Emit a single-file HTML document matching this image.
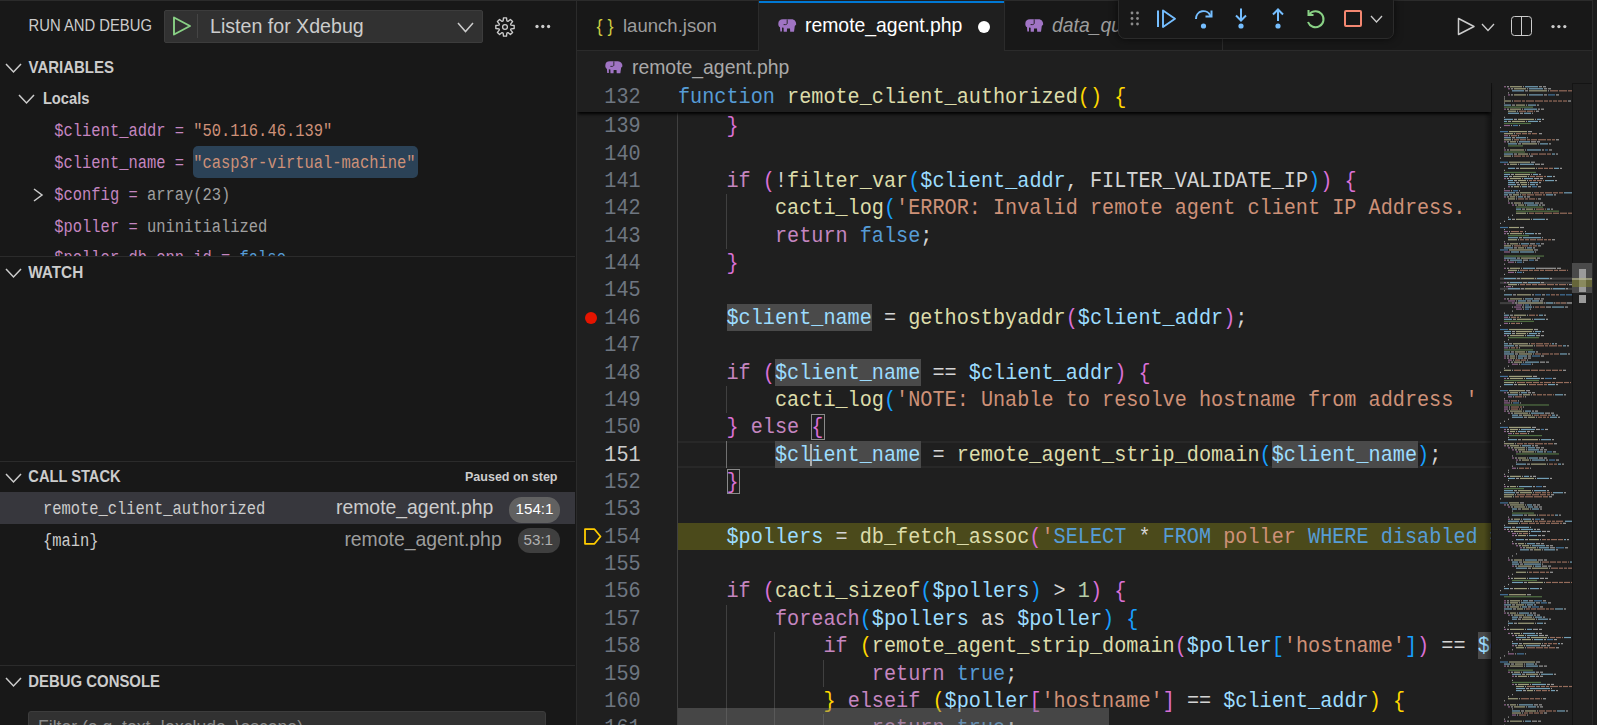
<!DOCTYPE html>
<html><head><meta charset="utf-8">
<style>
*{margin:0;padding:0;box-sizing:border-box}
html,body{width:1597px;height:725px;overflow:hidden;background:#181818;font-family:"Liberation Sans",sans-serif}
.r{position:absolute}
.t{position:absolute;white-space:nowrap}
#side{position:absolute;left:0;top:0;width:576px;height:725px;overflow:hidden}
#ed{position:absolute;left:0;top:0;width:1597px;height:725px;overflow:hidden}
#clip{position:absolute;left:0;top:0;width:1491px;height:725px;overflow:hidden}
.ln{position:absolute;left:577.7px;width:63px;text-align:right;font-family:"Liberation Mono",monospace;font-size:20.210px;line-height:27.36px;height:27.36px;color:#6e7681;white-space:pre;transform:translateY(0.8px) scaleY(1.1);transform-origin:0 19.07px}
.ln.cur{color:#cccccc}
.cl{position:absolute;left:678px;font-family:"Liberation Mono",monospace;font-size:20.210px;line-height:27.36px;height:27.36px;color:#d4d4d4;white-space:pre;transform:translateY(1.5px) scaleY(1.06);transform-origin:0 19.07px}
</style></head><body>
<div id="ed">
<div class="r" style="left:577px;top:0px;width:1020px;height:725px;background:#1f1f1f;"></div>
<div class="r" style="left:677px;top:522.7px;width:814px;height:27.36px;background:#4b4a1b;"></div>
<div class="r" style="left:677px;top:440.62px;width:814px;height:27.36px;background:transparent;border-top:2px solid #282828;border-bottom:2px solid #282828;"></div>
<div class="r" style="left:677.0px;top:112px;width:1px;height:629.6px;background:#404040;"></div>
<div class="r" style="left:725.5px;top:194.4px;width:1px;height:54.7px;background:#404040;"></div>
<div class="r" style="left:725.5px;top:385.9px;width:1px;height:27.4px;background:#404040;"></div>
<div class="r" style="left:725.5px;top:440.6px;width:1px;height:27.4px;background:#707070;"></div>
<div class="r" style="left:725.5px;top:604.8px;width:1px;height:136.8px;background:#404040;"></div>
<div class="r" style="left:774.0px;top:632.1px;width:1px;height:109.4px;background:#404040;"></div>
<div class="r" style="left:822.5px;top:659.5px;width:1px;height:27.4px;background:#404040;"></div>
<div class="r" style="left:822.5px;top:714.2px;width:1px;height:27.4px;background:#404040;"></div>
<div class="r" style="left:726.5px;top:303.82px;width:145.51px;height:27.36px;background:#4a4a4a;"></div>
<div class="r" style="left:775.01px;top:358.54px;width:145.51px;height:27.36px;background:#4a4a4a;"></div>
<div class="r" style="left:811.39px;top:414.26px;width:13.13px;height:25.36px;background:transparent;border:1px solid #8a8a8a;"></div>
<div class="r" style="left:775.01px;top:440.62px;width:145.51px;height:27.36px;background:#4a4a4a;"></div>
<div class="r" style="left:1272.17px;top:440.62px;width:145.51px;height:27.36px;background:#4a4a4a;"></div>
<div class="r" style="left:726.5px;top:468.98px;width:13.13px;height:25.36px;background:transparent;border:1px solid #8a8a8a;"></div>
<div class="r" style="left:1478.32px;top:632.14px;width:145.51px;height:27.36px;background:#4a4a4a;"></div>
<div class="ln" style="top:112.30px">139</div>
<div class="cl" style="top:112.30px"><span style="color:#d4d4d4">    </span><span style="color:#da70d6">}</span></div>
<div class="ln" style="top:139.66px">140</div>
<div class="ln" style="top:167.02px">141</div>
<div class="cl" style="top:167.02px"><span style="color:#d4d4d4">    </span><span style="color:#c586c0">if</span><span style="color:#d4d4d4"> </span><span style="color:#da70d6">(</span><span style="color:#d4d4d4">!</span><span style="color:#dcdcaa">filter_var</span><span style="color:#179fff">(</span><span style="color:#9cdcfe">$client_addr</span><span style="color:#d4d4d4">, FILTER_VALIDATE_IP</span><span style="color:#179fff">)</span><span style="color:#da70d6">)</span><span style="color:#d4d4d4"> </span><span style="color:#da70d6">{</span></div>
<div class="ln" style="top:194.38px">142</div>
<div class="cl" style="top:194.38px"><span style="color:#d4d4d4">        </span><span style="color:#dcdcaa">cacti_log</span><span style="color:#179fff">(</span><span style="color:#ce9178">&#x27;ERROR: Invalid remote agent client IP Address. </span></div>
<div class="ln" style="top:221.74px">143</div>
<div class="cl" style="top:221.74px"><span style="color:#d4d4d4">        </span><span style="color:#c586c0">return</span><span style="color:#d4d4d4"> </span><span style="color:#569cd6">false</span><span style="color:#d4d4d4">;</span></div>
<div class="ln" style="top:249.10px">144</div>
<div class="cl" style="top:249.10px"><span style="color:#d4d4d4">    </span><span style="color:#da70d6">}</span></div>
<div class="ln" style="top:276.46px">145</div>
<div class="ln" style="top:303.82px">146</div>
<div class="cl" style="top:303.82px"><span style="color:#d4d4d4">    </span><span style="color:#9cdcfe">$client_name</span><span style="color:#d4d4d4"> = </span><span style="color:#dcdcaa">gethostbyaddr</span><span style="color:#da70d6">(</span><span style="color:#9cdcfe">$client_addr</span><span style="color:#da70d6">)</span><span style="color:#d4d4d4">;</span></div>
<div class="ln" style="top:331.18px">147</div>
<div class="ln" style="top:358.54px">148</div>
<div class="cl" style="top:358.54px"><span style="color:#d4d4d4">    </span><span style="color:#c586c0">if</span><span style="color:#d4d4d4"> </span><span style="color:#da70d6">(</span><span style="color:#9cdcfe">$client_name</span><span style="color:#d4d4d4"> == </span><span style="color:#9cdcfe">$client_addr</span><span style="color:#da70d6">)</span><span style="color:#d4d4d4"> </span><span style="color:#da70d6">{</span></div>
<div class="ln" style="top:385.90px">149</div>
<div class="cl" style="top:385.90px"><span style="color:#d4d4d4">        </span><span style="color:#dcdcaa">cacti_log</span><span style="color:#179fff">(</span><span style="color:#ce9178">&#x27;NOTE: Unable to resolve hostname from address &#x27; . $client_addr</span></div>
<div class="ln" style="top:413.26px">150</div>
<div class="cl" style="top:413.26px"><span style="color:#d4d4d4">    </span><span style="color:#da70d6">}</span><span style="color:#d4d4d4"> </span><span style="color:#c586c0">else</span><span style="color:#d4d4d4"> </span><span style="color:#da70d6">{</span></div>
<div class="ln cur" style="top:440.62px">151</div>
<div class="cl" style="top:440.62px"><span style="color:#d4d4d4">        </span><span style="color:#9cdcfe">$client_name</span><span style="color:#d4d4d4"> = </span><span style="color:#dcdcaa">remote_agent_strip_domain</span><span style="color:#179fff">(</span><span style="color:#9cdcfe">$client_name</span><span style="color:#179fff">)</span><span style="color:#d4d4d4">;</span></div>
<div class="ln" style="top:467.98px">152</div>
<div class="cl" style="top:467.98px"><span style="color:#d4d4d4">    </span><span style="color:#da70d6">}</span></div>
<div class="ln" style="top:495.34px">153</div>
<div class="ln" style="top:522.70px">154</div>
<div class="cl" style="top:522.70px"><span style="color:#d4d4d4">    </span><span style="color:#9cdcfe">$pollers</span><span style="color:#d4d4d4"> = </span><span style="color:#dcdcaa">db_fetch_assoc</span><span style="color:#da70d6">(</span><span style="color:#ce9178">&#x27;</span><span style="color:#569cd6">SELECT</span><span style="color:#d4d4d4"> * </span><span style="color:#569cd6">FROM</span><span style="color:#ce9178"> poller </span><span style="color:#569cd6">WHERE</span><span style="color:#569cd6"> disabled</span><span style="color:#d4d4d4"> = </span><span style="color:#ce9178">&quot;&quot;)</span></div>
<div class="ln" style="top:550.06px">155</div>
<div class="ln" style="top:577.42px">156</div>
<div class="cl" style="top:577.42px"><span style="color:#d4d4d4">    </span><span style="color:#c586c0">if</span><span style="color:#d4d4d4"> </span><span style="color:#da70d6">(</span><span style="color:#dcdcaa">cacti_sizeof</span><span style="color:#179fff">(</span><span style="color:#9cdcfe">$pollers</span><span style="color:#179fff">)</span><span style="color:#d4d4d4"> &gt; </span><span style="color:#b5cea8">1</span><span style="color:#da70d6">)</span><span style="color:#d4d4d4"> </span><span style="color:#da70d6">{</span></div>
<div class="ln" style="top:604.78px">157</div>
<div class="cl" style="top:604.78px"><span style="color:#d4d4d4">        </span><span style="color:#c586c0">foreach</span><span style="color:#179fff">(</span><span style="color:#9cdcfe">$pollers</span><span style="color:#d4d4d4"> as </span><span style="color:#9cdcfe">$poller</span><span style="color:#179fff">)</span><span style="color:#d4d4d4"> </span><span style="color:#179fff">{</span></div>
<div class="ln" style="top:632.14px">158</div>
<div class="cl" style="top:632.14px"><span style="color:#d4d4d4">            </span><span style="color:#c586c0">if</span><span style="color:#d4d4d4"> </span><span style="color:#ffd700">(</span><span style="color:#dcdcaa">remote_agent_strip_domain</span><span style="color:#da70d6">(</span><span style="color:#9cdcfe">$poller</span><span style="color:#179fff">[</span><span style="color:#ce9178">&#x27;hostname&#x27;</span><span style="color:#179fff">]</span><span style="color:#da70d6">)</span><span style="color:#d4d4d4"> == </span><span style="color:#9cdcfe">$client_name</span></div>
<div class="ln" style="top:659.50px">159</div>
<div class="cl" style="top:659.50px"><span style="color:#d4d4d4">                </span><span style="color:#c586c0">return</span><span style="color:#d4d4d4"> </span><span style="color:#569cd6">true</span><span style="color:#d4d4d4">;</span></div>
<div class="ln" style="top:686.86px">160</div>
<div class="cl" style="top:686.86px"><span style="color:#d4d4d4">            </span><span style="color:#ffd700">}</span><span style="color:#d4d4d4"> </span><span style="color:#c586c0">elseif</span><span style="color:#d4d4d4"> </span><span style="color:#ffd700">(</span><span style="color:#9cdcfe">$poller</span><span style="color:#da70d6">[</span><span style="color:#ce9178">&#x27;hostname&#x27;</span><span style="color:#da70d6">]</span><span style="color:#d4d4d4"> == </span><span style="color:#9cdcfe">$client_addr</span><span style="color:#ffd700">)</span><span style="color:#d4d4d4"> </span><span style="color:#ffd700">{</span></div>
<div class="ln" style="top:714.22px">161</div>
<div class="cl" style="top:714.22px"><span style="color:#d4d4d4">                </span><span style="color:#c586c0">return</span><span style="color:#d4d4d4"> </span><span style="color:#569cd6">true</span><span style="color:#d4d4d4">;</span></div>
<div class="r" style="left:810.4px;top:443.6px;width:2px;height:22px;background:#aeafad;"></div>
<div class="r" style="left:585px;top:311.5px;width:12px;height:12px;background:#e51400;border-radius:6px;"></div>
<svg class="r" style="left:582px;top:527px" width="21" height="20" viewBox="0 0 21 20"><path d="M3,2.2 L12.5,2.2 L18.5,9.5 L12.5,16.8 L3,16.8 Z" fill="none" stroke="#ffcc00" stroke-width="1.8" stroke-linejoin="round"/></svg>
<div class="r" style="left:1491px;top:83px;width:81px;height:642px;background:#1f1f1f;"></div>
<svg class="r" style="left:0;top:0;opacity:0.68" width="1597" height="725"><rect x="1500" y="302.08" width="72" height="2.1" fill="#505050"/><rect x="1500" y="287.80" width="72" height="2.1" fill="#505050"/><rect x="1500" y="281.68" width="72" height="2.1" fill="#505050"/><rect x="1500" y="277.60" width="72" height="2.1" fill="#505050"/><rect x="1504" y="86.14" width="2" height="1.2" fill="#c586c0"/><rect x="1507" y="86.14" width="2" height="1.2" fill="#d4d4d4"/><rect x="1510" y="86.14" width="12" height="1.2" fill="#dcdcaa"/><rect x="1523" y="86.14" width="1" height="1.2" fill="#d4d4d4"/><rect x="1525" y="86.14" width="13" height="1.2" fill="#9cdcfe"/><rect x="1539" y="86.14" width="3" height="1.2" fill="#d4d4d4"/><rect x="1543" y="86.14" width="3" height="1.2" fill="#d4d4d4"/><rect x="1508" y="88.18" width="2" height="1.2" fill="#c586c0"/><rect x="1511" y="88.18" width="2" height="1.2" fill="#d4d4d4"/><rect x="1514" y="88.18" width="12" height="1.2" fill="#dcdcaa"/><rect x="1527" y="88.18" width="1" height="1.2" fill="#d4d4d4"/><rect x="1529" y="88.18" width="14" height="1.2" fill="#9cdcfe"/><rect x="1544" y="88.18" width="3" height="1.2" fill="#d4d4d4"/><rect x="1548" y="88.18" width="3" height="1.2" fill="#d4d4d4"/><rect x="1512" y="90.22" width="12" height="1.2" fill="#9cdcfe"/><rect x="1525" y="90.22" width="3" height="1.2" fill="#d4d4d4"/><rect x="1529" y="90.22" width="18" height="1.2" fill="#dcdcaa"/><rect x="1548" y="90.22" width="1" height="1.2" fill="#d4d4d4"/><rect x="1550" y="90.22" width="8" height="1.2" fill="#ce9178"/><rect x="1559" y="90.22" width="8" height="1.2" fill="#ce9178"/><rect x="1568" y="90.22" width="4" height="1.2" fill="#ce9178"/><rect x="1508" y="92.26" width="1" height="1.2" fill="#d4d4d4"/><rect x="1508" y="94.30" width="2" height="1.2" fill="#c586c0"/><rect x="1511" y="94.30" width="2" height="1.2" fill="#d4d4d4"/><rect x="1514" y="94.30" width="12" height="1.2" fill="#dcdcaa"/><rect x="1527" y="94.30" width="1" height="1.2" fill="#d4d4d4"/><rect x="1529" y="94.30" width="14" height="1.2" fill="#9cdcfe"/><rect x="1544" y="94.30" width="3" height="1.2" fill="#d4d4d4"/><rect x="1548" y="94.30" width="7" height="1.2" fill="#569cd6"/><rect x="1556" y="94.30" width="3" height="1.2" fill="#d4d4d4"/><rect x="1504" y="96.34" width="1" height="1.2" fill="#d4d4d4"/><rect x="1504" y="98.38" width="1" height="1.2" fill="#d4d4d4"/><rect x="1504" y="100.42" width="7" height="1.2" fill="#dcdcaa"/><rect x="1512" y="100.42" width="1" height="1.2" fill="#d4d4d4"/><rect x="1514" y="100.42" width="7" height="1.2" fill="#ce9178"/><rect x="1522" y="100.42" width="3" height="1.2" fill="#ce9178"/><rect x="1526" y="100.42" width="8" height="1.2" fill="#ce9178"/><rect x="1535" y="100.42" width="8" height="1.2" fill="#ce9178"/><rect x="1544" y="100.42" width="4" height="1.2" fill="#ce9178"/><rect x="1549" y="100.42" width="3" height="1.2" fill="#ce9178"/><rect x="1553" y="100.42" width="4" height="1.2" fill="#ce9178"/><rect x="1558" y="100.42" width="4" height="1.2" fill="#ce9178"/><rect x="1563" y="100.42" width="4" height="1.2" fill="#ce9178"/><rect x="1568" y="100.42" width="3" height="1.2" fill="#d4d4d4"/><rect x="1504" y="102.46" width="1" height="1.2" fill="#d4d4d4"/><rect x="1504" y="104.50" width="7" height="1.2" fill="#9cdcfe"/><rect x="1512" y="104.50" width="3" height="1.2" fill="#d4d4d4"/><rect x="1516" y="104.50" width="9" height="1.2" fill="#dcdcaa"/><rect x="1526" y="104.50" width="1" height="1.2" fill="#d4d4d4"/><rect x="1528" y="104.50" width="8" height="1.2" fill="#9cdcfe"/><rect x="1537" y="104.50" width="2" height="1.2" fill="#d4d4d4"/><rect x="1504" y="106.54" width="29" height="1.2" fill="#6a9955"/><rect x="1504" y="108.58" width="2" height="1.2" fill="#c586c0"/><rect x="1507" y="108.58" width="2" height="1.2" fill="#d4d4d4"/><rect x="1510" y="108.58" width="11" height="1.2" fill="#dcdcaa"/><rect x="1522" y="108.58" width="1" height="1.2" fill="#d4d4d4"/><rect x="1524" y="108.58" width="13" height="1.2" fill="#9cdcfe"/><rect x="1538" y="108.58" width="2" height="1.2" fill="#d4d4d4"/><rect x="1541" y="108.58" width="3" height="1.2" fill="#d4d4d4"/><rect x="1508" y="110.62" width="8" height="1.2" fill="#dcdcaa"/><rect x="1517" y="110.62" width="1" height="1.2" fill="#d4d4d4"/><rect x="1519" y="110.62" width="7" height="1.2" fill="#ce9178"/><rect x="1527" y="110.62" width="6" height="1.2" fill="#ce9178"/><rect x="1534" y="110.62" width="1" height="1.2" fill="#ce9178"/><rect x="1536" y="110.62" width="3" height="1.2" fill="#d4d4d4"/><rect x="1508" y="112.66" width="11" height="1.2" fill="#9cdcfe"/><rect x="1520" y="112.66" width="3" height="1.2" fill="#d4d4d4"/><rect x="1524" y="112.66" width="7" height="1.2" fill="#9cdcfe"/><rect x="1532" y="112.66" width="1" height="1.2" fill="#d4d4d4"/><rect x="1504" y="116.74" width="1" height="1.2" fill="#d4d4d4"/><rect x="1504" y="118.78" width="9" height="1.2" fill="#9cdcfe"/><rect x="1514" y="118.78" width="3" height="1.2" fill="#d4d4d4"/><rect x="1518" y="118.78" width="16" height="1.2" fill="#dcdcaa"/><rect x="1535" y="118.78" width="1" height="1.2" fill="#d4d4d4"/><rect x="1537" y="118.78" width="4" height="1.2" fill="#9cdcfe"/><rect x="1542" y="118.78" width="2" height="1.2" fill="#d4d4d4"/><rect x="1504" y="120.82" width="3" height="1.2" fill="#9cdcfe"/><rect x="1508" y="120.82" width="3" height="1.2" fill="#d4d4d4"/><rect x="1512" y="120.82" width="13" height="1.2" fill="#dcdcaa"/><rect x="1526" y="120.82" width="1" height="1.2" fill="#d4d4d4"/><rect x="1528" y="120.82" width="10" height="1.2" fill="#9cdcfe"/><rect x="1539" y="120.82" width="2" height="1.2" fill="#d4d4d4"/><rect x="1504" y="122.86" width="27" height="1.2" fill="#6a9955"/><rect x="1504" y="124.90" width="6" height="1.2" fill="#c586c0"/><rect x="1511" y="124.90" width="1" height="1.2" fill="#d4d4d4"/><rect x="1513" y="124.90" width="5" height="1.2" fill="#569cd6"/><rect x="1519" y="124.90" width="1" height="1.2" fill="#d4d4d4"/><rect x="1500" y="126.94" width="1" height="1.2" fill="#d4d4d4"/><rect x="1500" y="131.02" width="8" height="1.2" fill="#569cd6"/><rect x="1509" y="131.02" width="18" height="1.2" fill="#dcdcaa"/><rect x="1528" y="131.02" width="4" height="1.2" fill="#d4d4d4"/><rect x="1504" y="133.06" width="9" height="1.2" fill="#dcdcaa"/><rect x="1514" y="133.06" width="1" height="1.2" fill="#d4d4d4"/><rect x="1516" y="133.06" width="5" height="1.2" fill="#ce9178"/><rect x="1522" y="133.06" width="5" height="1.2" fill="#ce9178"/><rect x="1528" y="133.06" width="3" height="1.2" fill="#ce9178"/><rect x="1532" y="133.06" width="5" height="1.2" fill="#ce9178"/><rect x="1539" y="133.06" width="3" height="1.2" fill="#d4d4d4"/><rect x="1504" y="135.10" width="4" height="1.2" fill="#c586c0"/><rect x="1509" y="135.10" width="1" height="1.2" fill="#d4d4d4"/><rect x="1511" y="135.10" width="6" height="1.2" fill="#ce9178"/><rect x="1518" y="135.10" width="1" height="1.2" fill="#d4d4d4"/><rect x="1504" y="137.14" width="7" height="1.2" fill="#9cdcfe"/><rect x="1512" y="137.14" width="3" height="1.2" fill="#d4d4d4"/><rect x="1516" y="137.14" width="10" height="1.2" fill="#9cdcfe"/><rect x="1527" y="137.14" width="1" height="1.2" fill="#d4d4d4"/><rect x="1504" y="139.18" width="7" height="1.2" fill="#dcdcaa"/><rect x="1512" y="139.18" width="1" height="1.2" fill="#d4d4d4"/><rect x="1514" y="139.18" width="5" height="1.2" fill="#ce9178"/><rect x="1520" y="139.18" width="6" height="1.2" fill="#ce9178"/><rect x="1527" y="139.18" width="3" height="1.2" fill="#ce9178"/><rect x="1531" y="139.18" width="6" height="1.2" fill="#ce9178"/><rect x="1538" y="139.18" width="8" height="1.2" fill="#ce9178"/><rect x="1547" y="139.18" width="4" height="1.2" fill="#ce9178"/><rect x="1552" y="139.18" width="3" height="1.2" fill="#ce9178"/><rect x="1556" y="139.18" width="3" height="1.2" fill="#d4d4d4"/><rect x="1504" y="141.22" width="2" height="1.2" fill="#c586c0"/><rect x="1507" y="141.22" width="2" height="1.2" fill="#d4d4d4"/><rect x="1510" y="141.22" width="6" height="1.2" fill="#dcdcaa"/><rect x="1517" y="141.22" width="1" height="1.2" fill="#d4d4d4"/><rect x="1519" y="141.22" width="11" height="1.2" fill="#9cdcfe"/><rect x="1531" y="141.22" width="5" height="1.2" fill="#d4d4d4"/><rect x="1537" y="141.22" width="3" height="1.2" fill="#d4d4d4"/><rect x="1508" y="143.26" width="9" height="1.2" fill="#9cdcfe"/><rect x="1518" y="143.26" width="3" height="1.2" fill="#d4d4d4"/><rect x="1522" y="143.26" width="15" height="1.2" fill="#dcdcaa"/><rect x="1538" y="143.26" width="1" height="1.2" fill="#d4d4d4"/><rect x="1540" y="143.26" width="8" height="1.2" fill="#9cdcfe"/><rect x="1549" y="143.26" width="2" height="1.2" fill="#d4d4d4"/><rect x="1508" y="145.30" width="15" height="1.2" fill="#6a9955"/><rect x="1504" y="147.34" width="1" height="1.2" fill="#d4d4d4"/><rect x="1504" y="149.38" width="2" height="1.2" fill="#c586c0"/><rect x="1507" y="149.38" width="2" height="1.2" fill="#d4d4d4"/><rect x="1510" y="149.38" width="14" height="1.2" fill="#dcdcaa"/><rect x="1525" y="149.38" width="1" height="1.2" fill="#d4d4d4"/><rect x="1527" y="149.38" width="14" height="1.2" fill="#9cdcfe"/><rect x="1542" y="149.38" width="2" height="1.2" fill="#d4d4d4"/><rect x="1545" y="149.38" width="3" height="1.2" fill="#569cd6"/><rect x="1549" y="149.38" width="3" height="1.2" fill="#d4d4d4"/><rect x="1504" y="151.42" width="21" height="1.2" fill="#6a9955"/><rect x="1504" y="153.46" width="9" height="1.2" fill="#9cdcfe"/><rect x="1514" y="153.46" width="3" height="1.2" fill="#d4d4d4"/><rect x="1518" y="153.46" width="10" height="1.2" fill="#dcdcaa"/><rect x="1529" y="153.46" width="1" height="1.2" fill="#d4d4d4"/><rect x="1531" y="153.46" width="7" height="1.2" fill="#ce9178"/><rect x="1539" y="153.46" width="7" height="1.2" fill="#ce9178"/><rect x="1547" y="153.46" width="4" height="1.2" fill="#ce9178"/><rect x="1552" y="153.46" width="3" height="1.2" fill="#9cdcfe"/><rect x="1556" y="153.46" width="2" height="1.2" fill="#d4d4d4"/><rect x="1504" y="155.50" width="7" height="1.2" fill="#dcdcaa"/><rect x="1512" y="155.50" width="1" height="1.2" fill="#d4d4d4"/><rect x="1514" y="155.50" width="7" height="1.2" fill="#ce9178"/><rect x="1522" y="155.50" width="3" height="1.2" fill="#ce9178"/><rect x="1526" y="155.50" width="3" height="1.2" fill="#ce9178"/><rect x="1530" y="155.50" width="3" height="1.2" fill="#d4d4d4"/><rect x="1500" y="157.54" width="1" height="1.2" fill="#d4d4d4"/><rect x="1500" y="161.62" width="8" height="1.2" fill="#569cd6"/><rect x="1509" y="161.62" width="21" height="1.2" fill="#dcdcaa"/><rect x="1531" y="161.62" width="4" height="1.2" fill="#d4d4d4"/><rect x="1504" y="163.66" width="2" height="1.2" fill="#c586c0"/><rect x="1507" y="163.66" width="2" height="1.2" fill="#d4d4d4"/><rect x="1510" y="163.66" width="7" height="1.2" fill="#dcdcaa"/><rect x="1518" y="163.66" width="1" height="1.2" fill="#d4d4d4"/><rect x="1520" y="163.66" width="14" height="1.2" fill="#9cdcfe"/><rect x="1535" y="163.66" width="5" height="1.2" fill="#d4d4d4"/><rect x="1541" y="163.66" width="3" height="1.2" fill="#d4d4d4"/><rect x="1508" y="167.74" width="7" height="1.2" fill="#9cdcfe"/><rect x="1516" y="167.74" width="3" height="1.2" fill="#d4d4d4"/><rect x="1520" y="167.74" width="15" height="1.2" fill="#dcdcaa"/><rect x="1536" y="167.74" width="1" height="1.2" fill="#d4d4d4"/><rect x="1538" y="167.74" width="5" height="1.2" fill="#ce9178"/><rect x="1544" y="167.74" width="4" height="1.2" fill="#ce9178"/><rect x="1549" y="167.74" width="4" height="1.2" fill="#ce9178"/><rect x="1554" y="167.74" width="5" height="1.2" fill="#9cdcfe"/><rect x="1560" y="167.74" width="2" height="1.2" fill="#d4d4d4"/><rect x="1504" y="169.78" width="1" height="1.2" fill="#d4d4d4"/><rect x="1504" y="171.82" width="32" height="1.2" fill="#6a9955"/><rect x="1504" y="173.86" width="6" height="1.2" fill="#9cdcfe"/><rect x="1511" y="173.86" width="3" height="1.2" fill="#d4d4d4"/><rect x="1515" y="173.86" width="15" height="1.2" fill="#dcdcaa"/><rect x="1531" y="173.86" width="1" height="1.2" fill="#d4d4d4"/><rect x="1533" y="173.86" width="5" height="1.2" fill="#9cdcfe"/><rect x="1539" y="173.86" width="2" height="1.2" fill="#d4d4d4"/><rect x="1504" y="175.90" width="4" height="1.2" fill="#9cdcfe"/><rect x="1509" y="175.90" width="3" height="1.2" fill="#d4d4d4"/><rect x="1513" y="175.90" width="14" height="1.2" fill="#dcdcaa"/><rect x="1528" y="175.90" width="1" height="1.2" fill="#d4d4d4"/><rect x="1530" y="175.90" width="5" height="1.2" fill="#ce9178"/><rect x="1536" y="175.90" width="7" height="1.2" fill="#ce9178"/><rect x="1544" y="175.90" width="2" height="1.2" fill="#ce9178"/><rect x="1547" y="175.90" width="5" height="1.2" fill="#9cdcfe"/><rect x="1553" y="175.90" width="2" height="1.2" fill="#d4d4d4"/><rect x="1504" y="177.94" width="2" height="1.2" fill="#c586c0"/><rect x="1507" y="177.94" width="2" height="1.2" fill="#d4d4d4"/><rect x="1510" y="177.94" width="11" height="1.2" fill="#dcdcaa"/><rect x="1522" y="177.94" width="1" height="1.2" fill="#d4d4d4"/><rect x="1524" y="177.94" width="9" height="1.2" fill="#9cdcfe"/><rect x="1534" y="177.94" width="5" height="1.2" fill="#d4d4d4"/><rect x="1540" y="177.94" width="3" height="1.2" fill="#d4d4d4"/><rect x="1508" y="179.98" width="5" height="1.2" fill="#9cdcfe"/><rect x="1514" y="179.98" width="3" height="1.2" fill="#d4d4d4"/><rect x="1518" y="179.98" width="8" height="1.2" fill="#dcdcaa"/><rect x="1527" y="179.98" width="1" height="1.2" fill="#d4d4d4"/><rect x="1529" y="179.98" width="3" height="1.2" fill="#ce9178"/><rect x="1533" y="179.98" width="3" height="1.2" fill="#ce9178"/><rect x="1537" y="179.98" width="5" height="1.2" fill="#ce9178"/><rect x="1543" y="179.98" width="1" height="1.2" fill="#ce9178"/><rect x="1545" y="179.98" width="9" height="1.2" fill="#9cdcfe"/><rect x="1555" y="179.98" width="2" height="1.2" fill="#d4d4d4"/><rect x="1508" y="182.02" width="7" height="1.2" fill="#9cdcfe"/><rect x="1516" y="182.02" width="3" height="1.2" fill="#d4d4d4"/><rect x="1520" y="182.02" width="7" height="1.2" fill="#dcdcaa"/><rect x="1528" y="182.02" width="1" height="1.2" fill="#d4d4d4"/><rect x="1530" y="182.02" width="8" height="1.2" fill="#9cdcfe"/><rect x="1539" y="182.02" width="2" height="1.2" fill="#d4d4d4"/><rect x="1508" y="184.06" width="8" height="1.2" fill="#9cdcfe"/><rect x="1517" y="184.06" width="3" height="1.2" fill="#d4d4d4"/><rect x="1521" y="184.06" width="6" height="1.2" fill="#dcdcaa"/><rect x="1528" y="184.06" width="1" height="1.2" fill="#d4d4d4"/><rect x="1530" y="184.06" width="5" height="1.2" fill="#9cdcfe"/><rect x="1536" y="184.06" width="2" height="1.2" fill="#d4d4d4"/><rect x="1508" y="186.10" width="2" height="1.2" fill="#c586c0"/><rect x="1511" y="186.10" width="2" height="1.2" fill="#d4d4d4"/><rect x="1514" y="186.10" width="5" height="1.2" fill="#dcdcaa"/><rect x="1520" y="186.10" width="1" height="1.2" fill="#d4d4d4"/><rect x="1522" y="186.10" width="5" height="1.2" fill="#9cdcfe"/><rect x="1528" y="186.10" width="3" height="1.2" fill="#d4d4d4"/><rect x="1532" y="186.10" width="5" height="1.2" fill="#569cd6"/><rect x="1538" y="186.10" width="3" height="1.2" fill="#d4d4d4"/><rect x="1504" y="188.14" width="1" height="1.2" fill="#d4d4d4"/><rect x="1504" y="190.18" width="6" height="1.2" fill="#c586c0"/><rect x="1511" y="190.18" width="1" height="1.2" fill="#d4d4d4"/><rect x="1513" y="190.18" width="5" height="1.2" fill="#569cd6"/><rect x="1519" y="190.18" width="1" height="1.2" fill="#d4d4d4"/><rect x="1504" y="192.22" width="11" height="1.2" fill="#9cdcfe"/><rect x="1516" y="192.22" width="3" height="1.2" fill="#d4d4d4"/><rect x="1520" y="192.22" width="11" height="1.2" fill="#dcdcaa"/><rect x="1532" y="192.22" width="1" height="1.2" fill="#d4d4d4"/><rect x="1534" y="192.22" width="5" height="1.2" fill="#ce9178"/><rect x="1540" y="192.22" width="4" height="1.2" fill="#ce9178"/><rect x="1545" y="192.22" width="7" height="1.2" fill="#ce9178"/><rect x="1553" y="192.22" width="5" height="1.2" fill="#ce9178"/><rect x="1559" y="192.22" width="4" height="1.2" fill="#ce9178"/><rect x="1564" y="192.22" width="8" height="1.2" fill="#9cdcfe"/><rect x="1504" y="194.26" width="4" height="1.2" fill="#9cdcfe"/><rect x="1509" y="194.26" width="3" height="1.2" fill="#d4d4d4"/><rect x="1513" y="194.26" width="6" height="1.2" fill="#dcdcaa"/><rect x="1520" y="194.26" width="1" height="1.2" fill="#d4d4d4"/><rect x="1522" y="194.26" width="4" height="1.2" fill="#ce9178"/><rect x="1527" y="194.26" width="7" height="1.2" fill="#ce9178"/><rect x="1535" y="194.26" width="7" height="1.2" fill="#ce9178"/><rect x="1543" y="194.26" width="2" height="1.2" fill="#ce9178"/><rect x="1546" y="194.26" width="7" height="1.2" fill="#9cdcfe"/><rect x="1554" y="194.26" width="2" height="1.2" fill="#d4d4d4"/><rect x="1504" y="196.30" width="2" height="1.2" fill="#c586c0"/><rect x="1507" y="196.30" width="2" height="1.2" fill="#d4d4d4"/><rect x="1510" y="196.30" width="5" height="1.2" fill="#dcdcaa"/><rect x="1516" y="196.30" width="1" height="1.2" fill="#d4d4d4"/><rect x="1518" y="196.30" width="5" height="1.2" fill="#9cdcfe"/><rect x="1524" y="196.30" width="2" height="1.2" fill="#d4d4d4"/><rect x="1527" y="196.30" width="3" height="1.2" fill="#d4d4d4"/><rect x="1508" y="198.34" width="7" height="1.2" fill="#dcdcaa"/><rect x="1516" y="198.34" width="1" height="1.2" fill="#d4d4d4"/><rect x="1518" y="198.34" width="6" height="1.2" fill="#ce9178"/><rect x="1525" y="198.34" width="3" height="1.2" fill="#ce9178"/><rect x="1529" y="198.34" width="6" height="1.2" fill="#ce9178"/><rect x="1536" y="198.34" width="1" height="1.2" fill="#ce9178"/><rect x="1538" y="198.34" width="3" height="1.2" fill="#d4d4d4"/><rect x="1508" y="200.38" width="1" height="1.2" fill="#d4d4d4"/><rect x="1508" y="202.42" width="2" height="1.2" fill="#c586c0"/><rect x="1511" y="202.42" width="2" height="1.2" fill="#d4d4d4"/><rect x="1514" y="202.42" width="7" height="1.2" fill="#dcdcaa"/><rect x="1522" y="202.42" width="1" height="1.2" fill="#d4d4d4"/><rect x="1524" y="202.42" width="10" height="1.2" fill="#9cdcfe"/><rect x="1535" y="202.42" width="4" height="1.2" fill="#d4d4d4"/><rect x="1540" y="202.42" width="3" height="1.2" fill="#d4d4d4"/><rect x="1512" y="204.46" width="2" height="1.2" fill="#c586c0"/><rect x="1515" y="204.46" width="2" height="1.2" fill="#d4d4d4"/><rect x="1518" y="204.46" width="6" height="1.2" fill="#dcdcaa"/><rect x="1525" y="204.46" width="1" height="1.2" fill="#d4d4d4"/><rect x="1527" y="204.46" width="11" height="1.2" fill="#9cdcfe"/><rect x="1539" y="204.46" width="2" height="1.2" fill="#d4d4d4"/><rect x="1542" y="204.46" width="3" height="1.2" fill="#d4d4d4"/><rect x="1516" y="206.50" width="27" height="1.2" fill="#6a9955"/><rect x="1516" y="208.54" width="5" height="1.2" fill="#9cdcfe"/><rect x="1522" y="208.54" width="3" height="1.2" fill="#d4d4d4"/><rect x="1526" y="208.54" width="7" height="1.2" fill="#dcdcaa"/><rect x="1534" y="208.54" width="1" height="1.2" fill="#d4d4d4"/><rect x="1536" y="208.54" width="8" height="1.2" fill="#ce9178"/><rect x="1545" y="208.54" width="1" height="1.2" fill="#ce9178"/><rect x="1547" y="208.54" width="3" height="1.2" fill="#9cdcfe"/><rect x="1551" y="208.54" width="2" height="1.2" fill="#d4d4d4"/><rect x="1516" y="210.58" width="43" height="1.2" fill="#6a9955"/><rect x="1516" y="212.62" width="10" height="1.2" fill="#dcdcaa"/><rect x="1527" y="212.62" width="1" height="1.2" fill="#d4d4d4"/><rect x="1529" y="212.62" width="5" height="1.2" fill="#ce9178"/><rect x="1535" y="212.62" width="8" height="1.2" fill="#ce9178"/><rect x="1544" y="212.62" width="8" height="1.2" fill="#ce9178"/><rect x="1553" y="212.62" width="6" height="1.2" fill="#ce9178"/><rect x="1560" y="212.62" width="7" height="1.2" fill="#ce9178"/><rect x="1568" y="212.62" width="4" height="1.2" fill="#ce9178"/><rect x="1512" y="214.66" width="1" height="1.2" fill="#d4d4d4"/><rect x="1508" y="216.70" width="1" height="1.2" fill="#d4d4d4"/><rect x="1508" y="218.74" width="3" height="1.2" fill="#9cdcfe"/><rect x="1512" y="218.74" width="3" height="1.2" fill="#d4d4d4"/><rect x="1516" y="218.74" width="14" height="1.2" fill="#dcdcaa"/><rect x="1531" y="218.74" width="1" height="1.2" fill="#d4d4d4"/><rect x="1533" y="218.74" width="12" height="1.2" fill="#9cdcfe"/><rect x="1546" y="218.74" width="2" height="1.2" fill="#d4d4d4"/><rect x="1504" y="220.78" width="1" height="1.2" fill="#d4d4d4"/><rect x="1500" y="222.82" width="1" height="1.2" fill="#d4d4d4"/><rect x="1500" y="226.90" width="8" height="1.2" fill="#569cd6"/><rect x="1509" y="226.90" width="10" height="1.2" fill="#dcdcaa"/><rect x="1520" y="226.90" width="4" height="1.2" fill="#d4d4d4"/><rect x="1504" y="228.94" width="1" height="1.2" fill="#d4d4d4"/><rect x="1504" y="230.98" width="4" height="1.2" fill="#c586c0"/><rect x="1509" y="230.98" width="1" height="1.2" fill="#d4d4d4"/><rect x="1511" y="230.98" width="8" height="1.2" fill="#ce9178"/><rect x="1520" y="230.98" width="3" height="1.2" fill="#ce9178"/><rect x="1525" y="230.98" width="1" height="1.2" fill="#d4d4d4"/><rect x="1504" y="233.02" width="2" height="1.2" fill="#c586c0"/><rect x="1507" y="233.02" width="2" height="1.2" fill="#d4d4d4"/><rect x="1510" y="233.02" width="12" height="1.2" fill="#dcdcaa"/><rect x="1523" y="233.02" width="1" height="1.2" fill="#d4d4d4"/><rect x="1525" y="233.02" width="9" height="1.2" fill="#9cdcfe"/><rect x="1535" y="233.02" width="2" height="1.2" fill="#d4d4d4"/><rect x="1538" y="233.02" width="3" height="1.2" fill="#d4d4d4"/><rect x="1508" y="235.06" width="21" height="1.2" fill="#6a9955"/><rect x="1508" y="237.10" width="10" height="1.2" fill="#9cdcfe"/><rect x="1519" y="237.10" width="3" height="1.2" fill="#d4d4d4"/><rect x="1523" y="237.10" width="18" height="1.2" fill="#9cdcfe"/><rect x="1542" y="237.10" width="1" height="1.2" fill="#d4d4d4"/><rect x="1508" y="239.14" width="9" height="1.2" fill="#dcdcaa"/><rect x="1518" y="239.14" width="1" height="1.2" fill="#d4d4d4"/><rect x="1520" y="239.14" width="4" height="1.2" fill="#ce9178"/><rect x="1525" y="239.14" width="4" height="1.2" fill="#ce9178"/><rect x="1530" y="239.14" width="6" height="1.2" fill="#ce9178"/><rect x="1537" y="239.14" width="6" height="1.2" fill="#ce9178"/><rect x="1544" y="239.14" width="3" height="1.2" fill="#ce9178"/><rect x="1548" y="239.14" width="3" height="1.2" fill="#ce9178"/><rect x="1552" y="239.14" width="3" height="1.2" fill="#d4d4d4"/><rect x="1504" y="241.18" width="1" height="1.2" fill="#d4d4d4"/><rect x="1504" y="243.22" width="2" height="1.2" fill="#c586c0"/><rect x="1507" y="243.22" width="2" height="1.2" fill="#d4d4d4"/><rect x="1510" y="243.22" width="8" height="1.2" fill="#dcdcaa"/><rect x="1519" y="243.22" width="1" height="1.2" fill="#d4d4d4"/><rect x="1521" y="243.22" width="8" height="1.2" fill="#9cdcfe"/><rect x="1530" y="243.22" width="5" height="1.2" fill="#d4d4d4"/><rect x="1536" y="243.22" width="4" height="1.2" fill="#569cd6"/><rect x="1541" y="243.22" width="3" height="1.2" fill="#d4d4d4"/><rect x="1504" y="245.26" width="7" height="1.2" fill="#dcdcaa"/><rect x="1512" y="245.26" width="1" height="1.2" fill="#d4d4d4"/><rect x="1514" y="245.26" width="7" height="1.2" fill="#ce9178"/><rect x="1522" y="245.26" width="6" height="1.2" fill="#ce9178"/><rect x="1529" y="245.26" width="3" height="1.2" fill="#ce9178"/><rect x="1533" y="245.26" width="4" height="1.2" fill="#ce9178"/><rect x="1538" y="245.26" width="3" height="1.2" fill="#d4d4d4"/><rect x="1504" y="247.30" width="9" height="1.2" fill="#9cdcfe"/><rect x="1514" y="247.30" width="3" height="1.2" fill="#d4d4d4"/><rect x="1518" y="247.30" width="6" height="1.2" fill="#dcdcaa"/><rect x="1525" y="247.30" width="1" height="1.2" fill="#d4d4d4"/><rect x="1527" y="247.30" width="5" height="1.2" fill="#9cdcfe"/><rect x="1533" y="247.30" width="2" height="1.2" fill="#d4d4d4"/><rect x="1504" y="312.58" width="1" height="1.2" fill="#d4d4d4"/><rect x="1504" y="314.62" width="5" height="1.2" fill="#9cdcfe"/><rect x="1510" y="314.62" width="3" height="1.2" fill="#d4d4d4"/><rect x="1514" y="314.62" width="12" height="1.2" fill="#dcdcaa"/><rect x="1527" y="314.62" width="1" height="1.2" fill="#d4d4d4"/><rect x="1529" y="314.62" width="6" height="1.2" fill="#ce9178"/><rect x="1536" y="314.62" width="2" height="1.2" fill="#ce9178"/><rect x="1539" y="314.62" width="4" height="1.2" fill="#9cdcfe"/><rect x="1544" y="314.62" width="2" height="1.2" fill="#d4d4d4"/><rect x="1504" y="316.66" width="4" height="1.2" fill="#c586c0"/><rect x="1509" y="316.66" width="1" height="1.2" fill="#d4d4d4"/><rect x="1511" y="316.66" width="5" height="1.2" fill="#ce9178"/><rect x="1517" y="316.66" width="2" height="1.2" fill="#ce9178"/><rect x="1520" y="316.66" width="1" height="1.2" fill="#d4d4d4"/><rect x="1504" y="318.70" width="8" height="1.2" fill="#9cdcfe"/><rect x="1513" y="318.70" width="3" height="1.2" fill="#d4d4d4"/><rect x="1517" y="318.70" width="14" height="1.2" fill="#dcdcaa"/><rect x="1532" y="318.70" width="1" height="1.2" fill="#d4d4d4"/><rect x="1534" y="318.70" width="11" height="1.2" fill="#9cdcfe"/><rect x="1546" y="318.70" width="2" height="1.2" fill="#d4d4d4"/><rect x="1504" y="320.74" width="30" height="1.2" fill="#6a9955"/><rect x="1504" y="322.78" width="4" height="1.2" fill="#c586c0"/><rect x="1509" y="322.78" width="1" height="1.2" fill="#d4d4d4"/><rect x="1511" y="322.78" width="4" height="1.2" fill="#ce9178"/><rect x="1516" y="322.78" width="4" height="1.2" fill="#ce9178"/><rect x="1521" y="322.78" width="1" height="1.2" fill="#d4d4d4"/><rect x="1500" y="324.82" width="1" height="1.2" fill="#d4d4d4"/><rect x="1500" y="328.90" width="8" height="1.2" fill="#569cd6"/><rect x="1509" y="328.90" width="24" height="1.2" fill="#dcdcaa"/><rect x="1534" y="328.90" width="4" height="1.2" fill="#d4d4d4"/><rect x="1504" y="330.94" width="7" height="1.2" fill="#9cdcfe"/><rect x="1512" y="330.94" width="3" height="1.2" fill="#d4d4d4"/><rect x="1516" y="330.94" width="16" height="1.2" fill="#dcdcaa"/><rect x="1533" y="330.94" width="1" height="1.2" fill="#d4d4d4"/><rect x="1535" y="330.94" width="6" height="1.2" fill="#9cdcfe"/><rect x="1542" y="330.94" width="2" height="1.2" fill="#d4d4d4"/><rect x="1504" y="332.98" width="7" height="1.2" fill="#9cdcfe"/><rect x="1512" y="332.98" width="3" height="1.2" fill="#d4d4d4"/><rect x="1516" y="332.98" width="10" height="1.2" fill="#dcdcaa"/><rect x="1527" y="332.98" width="1" height="1.2" fill="#d4d4d4"/><rect x="1529" y="332.98" width="8" height="1.2" fill="#9cdcfe"/><rect x="1538" y="332.98" width="2" height="1.2" fill="#d4d4d4"/><rect x="1504" y="335.02" width="2" height="1.2" fill="#c586c0"/><rect x="1507" y="335.02" width="2" height="1.2" fill="#d4d4d4"/><rect x="1510" y="335.02" width="14" height="1.2" fill="#dcdcaa"/><rect x="1525" y="335.02" width="1" height="1.2" fill="#d4d4d4"/><rect x="1527" y="335.02" width="8" height="1.2" fill="#9cdcfe"/><rect x="1536" y="335.02" width="4" height="1.2" fill="#d4d4d4"/><rect x="1541" y="335.02" width="3" height="1.2" fill="#d4d4d4"/><rect x="1508" y="337.06" width="31" height="1.2" fill="#6a9955"/><rect x="1508" y="339.10" width="1" height="1.2" fill="#d4d4d4"/><rect x="1504" y="341.14" width="1" height="1.2" fill="#d4d4d4"/><rect x="1504" y="343.18" width="4" height="1.2" fill="#9cdcfe"/><rect x="1509" y="343.18" width="3" height="1.2" fill="#d4d4d4"/><rect x="1513" y="343.18" width="15" height="1.2" fill="#dcdcaa"/><rect x="1529" y="343.18" width="1" height="1.2" fill="#d4d4d4"/><rect x="1531" y="343.18" width="4" height="1.2" fill="#ce9178"/><rect x="1536" y="343.18" width="7" height="1.2" fill="#ce9178"/><rect x="1544" y="343.18" width="5" height="1.2" fill="#ce9178"/><rect x="1550" y="343.18" width="1" height="1.2" fill="#ce9178"/><rect x="1552" y="343.18" width="2" height="1.2" fill="#9cdcfe"/><rect x="1555" y="343.18" width="2" height="1.2" fill="#d4d4d4"/><rect x="1504" y="345.22" width="10" height="1.2" fill="#9cdcfe"/><rect x="1515" y="345.22" width="3" height="1.2" fill="#d4d4d4"/><rect x="1519" y="345.22" width="14" height="1.2" fill="#dcdcaa"/><rect x="1534" y="345.22" width="1" height="1.2" fill="#d4d4d4"/><rect x="1536" y="345.22" width="8" height="1.2" fill="#ce9178"/><rect x="1545" y="345.22" width="3" height="1.2" fill="#ce9178"/><rect x="1549" y="345.22" width="8" height="1.2" fill="#ce9178"/><rect x="1558" y="345.22" width="4" height="1.2" fill="#ce9178"/><rect x="1563" y="345.22" width="3" height="1.2" fill="#9cdcfe"/><rect x="1567" y="345.22" width="2" height="1.2" fill="#d4d4d4"/><rect x="1504" y="347.26" width="4" height="1.2" fill="#c586c0"/><rect x="1509" y="347.26" width="1" height="1.2" fill="#d4d4d4"/><rect x="1511" y="347.26" width="4" height="1.2" fill="#ce9178"/><rect x="1516" y="347.26" width="2" height="1.2" fill="#ce9178"/><rect x="1519" y="347.26" width="1" height="1.2" fill="#d4d4d4"/><rect x="1504" y="349.30" width="29" height="1.2" fill="#6a9955"/><rect x="1504" y="351.34" width="6" height="1.2" fill="#9cdcfe"/><rect x="1511" y="351.34" width="3" height="1.2" fill="#d4d4d4"/><rect x="1515" y="351.34" width="10" height="1.2" fill="#dcdcaa"/><rect x="1526" y="351.34" width="1" height="1.2" fill="#d4d4d4"/><rect x="1528" y="351.34" width="7" height="1.2" fill="#9cdcfe"/><rect x="1536" y="351.34" width="2" height="1.2" fill="#d4d4d4"/><rect x="1504" y="353.38" width="10" height="1.2" fill="#9cdcfe"/><rect x="1515" y="353.38" width="3" height="1.2" fill="#d4d4d4"/><rect x="1519" y="353.38" width="13" height="1.2" fill="#dcdcaa"/><rect x="1533" y="353.38" width="1" height="1.2" fill="#d4d4d4"/><rect x="1535" y="353.38" width="6" height="1.2" fill="#ce9178"/><rect x="1542" y="353.38" width="7" height="1.2" fill="#ce9178"/><rect x="1550" y="353.38" width="3" height="1.2" fill="#ce9178"/><rect x="1554" y="353.38" width="5" height="1.2" fill="#ce9178"/><rect x="1560" y="353.38" width="7" height="1.2" fill="#9cdcfe"/><rect x="1568" y="353.38" width="2" height="1.2" fill="#d4d4d4"/><rect x="1504" y="355.42" width="2" height="1.2" fill="#c586c0"/><rect x="1507" y="355.42" width="2" height="1.2" fill="#d4d4d4"/><rect x="1510" y="355.42" width="5" height="1.2" fill="#dcdcaa"/><rect x="1516" y="355.42" width="1" height="1.2" fill="#d4d4d4"/><rect x="1518" y="355.42" width="9" height="1.2" fill="#9cdcfe"/><rect x="1528" y="355.42" width="3" height="1.2" fill="#d4d4d4"/><rect x="1532" y="355.42" width="8" height="1.2" fill="#569cd6"/><rect x="1541" y="355.42" width="3" height="1.2" fill="#d4d4d4"/><rect x="1504" y="357.46" width="2" height="1.2" fill="#c586c0"/><rect x="1507" y="357.46" width="2" height="1.2" fill="#d4d4d4"/><rect x="1510" y="357.46" width="5" height="1.2" fill="#dcdcaa"/><rect x="1516" y="357.46" width="1" height="1.2" fill="#d4d4d4"/><rect x="1518" y="357.46" width="5" height="1.2" fill="#9cdcfe"/><rect x="1524" y="357.46" width="3" height="1.2" fill="#d4d4d4"/><rect x="1528" y="357.46" width="3" height="1.2" fill="#d4d4d4"/><rect x="1508" y="359.50" width="4" height="1.2" fill="#c586c0"/><rect x="1513" y="359.50" width="1" height="1.2" fill="#d4d4d4"/><rect x="1515" y="359.50" width="5" height="1.2" fill="#ce9178"/><rect x="1521" y="359.50" width="5" height="1.2" fill="#ce9178"/><rect x="1527" y="359.50" width="1" height="1.2" fill="#d4d4d4"/><rect x="1508" y="361.54" width="2" height="1.2" fill="#c586c0"/><rect x="1511" y="361.54" width="2" height="1.2" fill="#d4d4d4"/><rect x="1514" y="361.54" width="8" height="1.2" fill="#dcdcaa"/><rect x="1523" y="361.54" width="1" height="1.2" fill="#d4d4d4"/><rect x="1525" y="361.54" width="14" height="1.2" fill="#9cdcfe"/><rect x="1540" y="361.54" width="5" height="1.2" fill="#d4d4d4"/><rect x="1546" y="361.54" width="3" height="1.2" fill="#d4d4d4"/><rect x="1512" y="363.58" width="6" height="1.2" fill="#c586c0"/><rect x="1519" y="363.58" width="1" height="1.2" fill="#d4d4d4"/><rect x="1521" y="363.58" width="10" height="1.2" fill="#569cd6"/><rect x="1532" y="363.58" width="1" height="1.2" fill="#d4d4d4"/><rect x="1508" y="365.62" width="1" height="1.2" fill="#d4d4d4"/><rect x="1504" y="367.66" width="1" height="1.2" fill="#d4d4d4"/><rect x="1504" y="369.70" width="7" height="1.2" fill="#dcdcaa"/><rect x="1512" y="369.70" width="1" height="1.2" fill="#d4d4d4"/><rect x="1514" y="369.70" width="7" height="1.2" fill="#ce9178"/><rect x="1522" y="369.70" width="8" height="1.2" fill="#ce9178"/><rect x="1531" y="369.70" width="7" height="1.2" fill="#ce9178"/><rect x="1539" y="369.70" width="6" height="1.2" fill="#ce9178"/><rect x="1546" y="369.70" width="5" height="1.2" fill="#ce9178"/><rect x="1552" y="369.70" width="6" height="1.2" fill="#ce9178"/><rect x="1559" y="369.70" width="3" height="1.2" fill="#ce9178"/><rect x="1563" y="369.70" width="3" height="1.2" fill="#d4d4d4"/><rect x="1500" y="371.74" width="1" height="1.2" fill="#d4d4d4"/><rect x="1500" y="375.82" width="8" height="1.2" fill="#569cd6"/><rect x="1509" y="375.82" width="23" height="1.2" fill="#dcdcaa"/><rect x="1533" y="375.82" width="4" height="1.2" fill="#d4d4d4"/><rect x="1504" y="377.86" width="2" height="1.2" fill="#c586c0"/><rect x="1507" y="377.86" width="2" height="1.2" fill="#d4d4d4"/><rect x="1510" y="377.86" width="13" height="1.2" fill="#dcdcaa"/><rect x="1524" y="377.86" width="1" height="1.2" fill="#d4d4d4"/><rect x="1526" y="377.86" width="14" height="1.2" fill="#9cdcfe"/><rect x="1541" y="377.86" width="3" height="1.2" fill="#d4d4d4"/><rect x="1545" y="377.86" width="7" height="1.2" fill="#569cd6"/><rect x="1553" y="377.86" width="3" height="1.2" fill="#d4d4d4"/><rect x="1504" y="379.90" width="35" height="1.2" fill="#6a9955"/><rect x="1504" y="381.94" width="10" height="1.2" fill="#dcdcaa"/><rect x="1515" y="381.94" width="1" height="1.2" fill="#d4d4d4"/><rect x="1517" y="381.94" width="8" height="1.2" fill="#ce9178"/><rect x="1526" y="381.94" width="6" height="1.2" fill="#ce9178"/><rect x="1533" y="381.94" width="6" height="1.2" fill="#ce9178"/><rect x="1540" y="381.94" width="3" height="1.2" fill="#ce9178"/><rect x="1544" y="381.94" width="7" height="1.2" fill="#ce9178"/><rect x="1552" y="381.94" width="3" height="1.2" fill="#ce9178"/><rect x="1556" y="381.94" width="7" height="1.2" fill="#ce9178"/><rect x="1564" y="381.94" width="5" height="1.2" fill="#ce9178"/><rect x="1570" y="381.94" width="1" height="1.2" fill="#ce9178"/><rect x="1504" y="383.98" width="9" height="1.2" fill="#9cdcfe"/><rect x="1514" y="383.98" width="3" height="1.2" fill="#d4d4d4"/><rect x="1518" y="383.98" width="8" height="1.2" fill="#dcdcaa"/><rect x="1527" y="383.98" width="1" height="1.2" fill="#d4d4d4"/><rect x="1529" y="383.98" width="7" height="1.2" fill="#ce9178"/><rect x="1537" y="383.98" width="6" height="1.2" fill="#ce9178"/><rect x="1544" y="383.98" width="3" height="1.2" fill="#ce9178"/><rect x="1548" y="383.98" width="7" height="1.2" fill="#9cdcfe"/><rect x="1556" y="383.98" width="2" height="1.2" fill="#d4d4d4"/><rect x="1500" y="386.02" width="1" height="1.2" fill="#d4d4d4"/><rect x="1500" y="390.10" width="8" height="1.2" fill="#569cd6"/><rect x="1509" y="390.10" width="16" height="1.2" fill="#dcdcaa"/><rect x="1526" y="390.10" width="4" height="1.2" fill="#d4d4d4"/><rect x="1504" y="392.14" width="2" height="1.2" fill="#c586c0"/><rect x="1507" y="392.14" width="2" height="1.2" fill="#d4d4d4"/><rect x="1510" y="392.14" width="8" height="1.2" fill="#dcdcaa"/><rect x="1519" y="392.14" width="1" height="1.2" fill="#d4d4d4"/><rect x="1521" y="392.14" width="6" height="1.2" fill="#9cdcfe"/><rect x="1528" y="392.14" width="3" height="1.2" fill="#d4d4d4"/><rect x="1532" y="392.14" width="3" height="1.2" fill="#d4d4d4"/><rect x="1508" y="394.18" width="10" height="1.2" fill="#9cdcfe"/><rect x="1519" y="394.18" width="3" height="1.2" fill="#d4d4d4"/><rect x="1523" y="394.18" width="7" height="1.2" fill="#dcdcaa"/><rect x="1531" y="394.18" width="1" height="1.2" fill="#d4d4d4"/><rect x="1533" y="394.18" width="3" height="1.2" fill="#ce9178"/><rect x="1537" y="394.18" width="5" height="1.2" fill="#ce9178"/><rect x="1543" y="394.18" width="3" height="1.2" fill="#ce9178"/><rect x="1547" y="394.18" width="5" height="1.2" fill="#ce9178"/><rect x="1553" y="394.18" width="1" height="1.2" fill="#ce9178"/><rect x="1555" y="394.18" width="8" height="1.2" fill="#9cdcfe"/><rect x="1564" y="394.18" width="2" height="1.2" fill="#d4d4d4"/><rect x="1508" y="396.22" width="4" height="1.2" fill="#c586c0"/><rect x="1513" y="396.22" width="1" height="1.2" fill="#d4d4d4"/><rect x="1515" y="396.22" width="7" height="1.2" fill="#ce9178"/><rect x="1523" y="396.22" width="1" height="1.2" fill="#ce9178"/><rect x="1525" y="396.22" width="1" height="1.2" fill="#d4d4d4"/><rect x="1504" y="398.26" width="1" height="1.2" fill="#d4d4d4"/><rect x="1504" y="400.30" width="4" height="1.2" fill="#c586c0"/><rect x="1509" y="400.30" width="1" height="1.2" fill="#d4d4d4"/><rect x="1511" y="400.30" width="6" height="1.2" fill="#ce9178"/><rect x="1518" y="400.30" width="1" height="1.2" fill="#d4d4d4"/><rect x="1504" y="402.34" width="6" height="1.2" fill="#c586c0"/><rect x="1511" y="402.34" width="1" height="1.2" fill="#d4d4d4"/><rect x="1513" y="402.34" width="6" height="1.2" fill="#569cd6"/><rect x="1520" y="402.34" width="1" height="1.2" fill="#d4d4d4"/><rect x="1504" y="404.38" width="45" height="1.2" fill="#6a9955"/><rect x="1504" y="406.42" width="4" height="1.2" fill="#c586c0"/><rect x="1509" y="406.42" width="1" height="1.2" fill="#d4d4d4"/><rect x="1511" y="406.42" width="8" height="1.2" fill="#ce9178"/><rect x="1520" y="406.42" width="2" height="1.2" fill="#ce9178"/><rect x="1523" y="406.42" width="1" height="1.2" fill="#d4d4d4"/><rect x="1504" y="408.46" width="4" height="1.2" fill="#c586c0"/><rect x="1509" y="408.46" width="1" height="1.2" fill="#d4d4d4"/><rect x="1511" y="408.46" width="7" height="1.2" fill="#ce9178"/><rect x="1519" y="408.46" width="1" height="1.2" fill="#ce9178"/><rect x="1521" y="408.46" width="1" height="1.2" fill="#d4d4d4"/><rect x="1504" y="410.50" width="2" height="1.2" fill="#c586c0"/><rect x="1507" y="410.50" width="2" height="1.2" fill="#d4d4d4"/><rect x="1510" y="410.50" width="12" height="1.2" fill="#dcdcaa"/><rect x="1523" y="410.50" width="1" height="1.2" fill="#d4d4d4"/><rect x="1525" y="410.50" width="6" height="1.2" fill="#9cdcfe"/><rect x="1532" y="410.50" width="2" height="1.2" fill="#d4d4d4"/><rect x="1535" y="410.50" width="3" height="1.2" fill="#d4d4d4"/><rect x="1508" y="412.54" width="2" height="1.2" fill="#c586c0"/><rect x="1511" y="412.54" width="2" height="1.2" fill="#d4d4d4"/><rect x="1514" y="412.54" width="14" height="1.2" fill="#dcdcaa"/><rect x="1529" y="412.54" width="1" height="1.2" fill="#d4d4d4"/><rect x="1531" y="412.54" width="13" height="1.2" fill="#9cdcfe"/><rect x="1545" y="412.54" width="5" height="1.2" fill="#d4d4d4"/><rect x="1551" y="412.54" width="3" height="1.2" fill="#d4d4d4"/><rect x="1512" y="414.58" width="6" height="1.2" fill="#9cdcfe"/><rect x="1519" y="414.58" width="3" height="1.2" fill="#d4d4d4"/><rect x="1523" y="414.58" width="8" height="1.2" fill="#dcdcaa"/><rect x="1532" y="414.58" width="1" height="1.2" fill="#d4d4d4"/><rect x="1534" y="414.58" width="5" height="1.2" fill="#ce9178"/><rect x="1540" y="414.58" width="7" height="1.2" fill="#ce9178"/><rect x="1548" y="414.58" width="3" height="1.2" fill="#ce9178"/><rect x="1552" y="414.58" width="3" height="1.2" fill="#9cdcfe"/><rect x="1556" y="414.58" width="2" height="1.2" fill="#d4d4d4"/><rect x="1512" y="416.62" width="11" height="1.2" fill="#9cdcfe"/><rect x="1524" y="416.62" width="3" height="1.2" fill="#d4d4d4"/><rect x="1528" y="416.62" width="7" height="1.2" fill="#dcdcaa"/><rect x="1536" y="416.62" width="1" height="1.2" fill="#d4d4d4"/><rect x="1538" y="416.62" width="4" height="1.2" fill="#ce9178"/><rect x="1543" y="416.62" width="3" height="1.2" fill="#ce9178"/><rect x="1547" y="416.62" width="2" height="1.2" fill="#ce9178"/><rect x="1550" y="416.62" width="7" height="1.2" fill="#9cdcfe"/><rect x="1558" y="416.62" width="2" height="1.2" fill="#d4d4d4"/><rect x="1508" y="418.66" width="1" height="1.2" fill="#d4d4d4"/><rect x="1504" y="420.70" width="1" height="1.2" fill="#d4d4d4"/><rect x="1500" y="422.74" width="1" height="1.2" fill="#d4d4d4"/><rect x="1500" y="426.82" width="8" height="1.2" fill="#569cd6"/><rect x="1509" y="426.82" width="22" height="1.2" fill="#dcdcaa"/><rect x="1532" y="426.82" width="4" height="1.2" fill="#d4d4d4"/><rect x="1504" y="428.86" width="2" height="1.2" fill="#c586c0"/><rect x="1507" y="428.86" width="2" height="1.2" fill="#d4d4d4"/><rect x="1510" y="428.86" width="8" height="1.2" fill="#dcdcaa"/><rect x="1519" y="428.86" width="1" height="1.2" fill="#d4d4d4"/><rect x="1521" y="428.86" width="14" height="1.2" fill="#9cdcfe"/><rect x="1536" y="428.86" width="4" height="1.2" fill="#d4d4d4"/><rect x="1541" y="428.86" width="3" height="1.2" fill="#569cd6"/><rect x="1545" y="428.86" width="3" height="1.2" fill="#d4d4d4"/><rect x="1504" y="430.90" width="2" height="1.2" fill="#c586c0"/><rect x="1507" y="430.90" width="2" height="1.2" fill="#d4d4d4"/><rect x="1510" y="430.90" width="5" height="1.2" fill="#dcdcaa"/><rect x="1516" y="430.90" width="1" height="1.2" fill="#d4d4d4"/><rect x="1518" y="430.90" width="8" height="1.2" fill="#9cdcfe"/><rect x="1527" y="430.90" width="3" height="1.2" fill="#d4d4d4"/><rect x="1531" y="430.90" width="3" height="1.2" fill="#d4d4d4"/><rect x="1508" y="432.94" width="4" height="1.2" fill="#c586c0"/><rect x="1513" y="432.94" width="1" height="1.2" fill="#d4d4d4"/><rect x="1515" y="432.94" width="4" height="1.2" fill="#ce9178"/><rect x="1520" y="432.94" width="7" height="1.2" fill="#ce9178"/><rect x="1528" y="432.94" width="1" height="1.2" fill="#d4d4d4"/><rect x="1508" y="434.98" width="34" height="1.2" fill="#6a9955"/><rect x="1508" y="437.02" width="1" height="1.2" fill="#d4d4d4"/><rect x="1508" y="439.06" width="9" height="1.2" fill="#9cdcfe"/><rect x="1518" y="439.06" width="3" height="1.2" fill="#d4d4d4"/><rect x="1522" y="439.06" width="16" height="1.2" fill="#dcdcaa"/><rect x="1539" y="439.06" width="1" height="1.2" fill="#d4d4d4"/><rect x="1541" y="439.06" width="10" height="1.2" fill="#9cdcfe"/><rect x="1552" y="439.06" width="2" height="1.2" fill="#d4d4d4"/><rect x="1504" y="441.10" width="1" height="1.2" fill="#d4d4d4"/><rect x="1504" y="443.14" width="10" height="1.2" fill="#dcdcaa"/><rect x="1515" y="443.14" width="1" height="1.2" fill="#d4d4d4"/><rect x="1517" y="443.14" width="6" height="1.2" fill="#ce9178"/><rect x="1524" y="443.14" width="3" height="1.2" fill="#ce9178"/><rect x="1528" y="443.14" width="6" height="1.2" fill="#ce9178"/><rect x="1535" y="443.14" width="8" height="1.2" fill="#ce9178"/><rect x="1544" y="443.14" width="3" height="1.2" fill="#ce9178"/><rect x="1548" y="443.14" width="5" height="1.2" fill="#ce9178"/><rect x="1554" y="443.14" width="3" height="1.2" fill="#d4d4d4"/><rect x="1504" y="445.18" width="2" height="1.2" fill="#c586c0"/><rect x="1507" y="445.18" width="2" height="1.2" fill="#d4d4d4"/><rect x="1510" y="445.18" width="9" height="1.2" fill="#dcdcaa"/><rect x="1520" y="445.18" width="1" height="1.2" fill="#d4d4d4"/><rect x="1522" y="445.18" width="9" height="1.2" fill="#9cdcfe"/><rect x="1532" y="445.18" width="2" height="1.2" fill="#d4d4d4"/><rect x="1535" y="445.18" width="3" height="1.2" fill="#d4d4d4"/><rect x="1508" y="447.22" width="2" height="1.2" fill="#c586c0"/><rect x="1511" y="447.22" width="2" height="1.2" fill="#d4d4d4"/><rect x="1514" y="447.22" width="11" height="1.2" fill="#dcdcaa"/><rect x="1526" y="447.22" width="1" height="1.2" fill="#d4d4d4"/><rect x="1528" y="447.22" width="7" height="1.2" fill="#9cdcfe"/><rect x="1536" y="447.22" width="4" height="1.2" fill="#d4d4d4"/><rect x="1541" y="447.22" width="3" height="1.2" fill="#d4d4d4"/><rect x="1512" y="449.26" width="2" height="1.2" fill="#c586c0"/><rect x="1515" y="449.26" width="2" height="1.2" fill="#d4d4d4"/><rect x="1518" y="449.26" width="7" height="1.2" fill="#dcdcaa"/><rect x="1526" y="449.26" width="1" height="1.2" fill="#d4d4d4"/><rect x="1528" y="449.26" width="11" height="1.2" fill="#9cdcfe"/><rect x="1540" y="449.26" width="3" height="1.2" fill="#d4d4d4"/><rect x="1544" y="449.26" width="3" height="1.2" fill="#d4d4d4"/><rect x="1516" y="451.30" width="2" height="1.2" fill="#c586c0"/><rect x="1519" y="451.30" width="2" height="1.2" fill="#d4d4d4"/><rect x="1522" y="451.30" width="12" height="1.2" fill="#dcdcaa"/><rect x="1535" y="451.30" width="1" height="1.2" fill="#d4d4d4"/><rect x="1537" y="451.30" width="6" height="1.2" fill="#9cdcfe"/><rect x="1544" y="451.30" width="2" height="1.2" fill="#d4d4d4"/><rect x="1547" y="451.30" width="5" height="1.2" fill="#569cd6"/><rect x="1553" y="451.30" width="3" height="1.2" fill="#d4d4d4"/><rect x="1516" y="453.34" width="43" height="1.2" fill="#6a9955"/><rect x="1512" y="455.38" width="1" height="1.2" fill="#d4d4d4"/><rect x="1512" y="457.42" width="2" height="1.2" fill="#c586c0"/><rect x="1515" y="457.42" width="2" height="1.2" fill="#d4d4d4"/><rect x="1518" y="457.42" width="8" height="1.2" fill="#dcdcaa"/><rect x="1527" y="457.42" width="1" height="1.2" fill="#d4d4d4"/><rect x="1529" y="457.42" width="9" height="1.2" fill="#9cdcfe"/><rect x="1539" y="457.42" width="4" height="1.2" fill="#d4d4d4"/><rect x="1544" y="457.42" width="3" height="1.2" fill="#d4d4d4"/><rect x="1516" y="459.46" width="2" height="1.2" fill="#c586c0"/><rect x="1519" y="459.46" width="2" height="1.2" fill="#d4d4d4"/><rect x="1522" y="459.46" width="7" height="1.2" fill="#dcdcaa"/><rect x="1530" y="459.46" width="1" height="1.2" fill="#d4d4d4"/><rect x="1532" y="459.46" width="13" height="1.2" fill="#9cdcfe"/><rect x="1546" y="459.46" width="2" height="1.2" fill="#d4d4d4"/><rect x="1549" y="459.46" width="6" height="1.2" fill="#569cd6"/><rect x="1556" y="459.46" width="3" height="1.2" fill="#d4d4d4"/><rect x="1516" y="461.50" width="1" height="1.2" fill="#d4d4d4"/><rect x="1516" y="463.54" width="10" height="1.2" fill="#9cdcfe"/><rect x="1527" y="463.54" width="3" height="1.2" fill="#d4d4d4"/><rect x="1531" y="463.54" width="15" height="1.2" fill="#dcdcaa"/><rect x="1547" y="463.54" width="1" height="1.2" fill="#d4d4d4"/><rect x="1549" y="463.54" width="4" height="1.2" fill="#ce9178"/><rect x="1554" y="463.54" width="3" height="1.2" fill="#ce9178"/><rect x="1558" y="463.54" width="3" height="1.2" fill="#9cdcfe"/><rect x="1562" y="463.54" width="2" height="1.2" fill="#d4d4d4"/><rect x="1512" y="465.58" width="1" height="1.2" fill="#d4d4d4"/><rect x="1512" y="467.62" width="4" height="1.2" fill="#c586c0"/><rect x="1517" y="467.62" width="1" height="1.2" fill="#d4d4d4"/><rect x="1519" y="467.62" width="5" height="1.2" fill="#ce9178"/><rect x="1525" y="467.62" width="4" height="1.2" fill="#ce9178"/><rect x="1530" y="467.62" width="1" height="1.2" fill="#d4d4d4"/><rect x="1508" y="469.66" width="1" height="1.2" fill="#d4d4d4"/><rect x="1508" y="471.70" width="1" height="1.2" fill="#d4d4d4"/><rect x="1504" y="473.74" width="1" height="1.2" fill="#d4d4d4"/><rect x="1504" y="475.78" width="2" height="1.2" fill="#c586c0"/><rect x="1507" y="475.78" width="2" height="1.2" fill="#d4d4d4"/><rect x="1510" y="475.78" width="11" height="1.2" fill="#dcdcaa"/><rect x="1522" y="475.78" width="1" height="1.2" fill="#d4d4d4"/><rect x="1524" y="475.78" width="5" height="1.2" fill="#9cdcfe"/><rect x="1530" y="475.78" width="2" height="1.2" fill="#d4d4d4"/><rect x="1533" y="475.78" width="3" height="1.2" fill="#d4d4d4"/><rect x="1508" y="477.82" width="7" height="1.2" fill="#9cdcfe"/><rect x="1516" y="477.82" width="3" height="1.2" fill="#d4d4d4"/><rect x="1520" y="477.82" width="14" height="1.2" fill="#dcdcaa"/><rect x="1535" y="477.82" width="1" height="1.2" fill="#d4d4d4"/><rect x="1537" y="477.82" width="12" height="1.2" fill="#9cdcfe"/><rect x="1550" y="477.82" width="2" height="1.2" fill="#d4d4d4"/><rect x="1508" y="479.86" width="1" height="1.2" fill="#d4d4d4"/><rect x="1504" y="483.94" width="1" height="1.2" fill="#d4d4d4"/><rect x="1504" y="485.98" width="2" height="1.2" fill="#c586c0"/><rect x="1507" y="485.98" width="2" height="1.2" fill="#d4d4d4"/><rect x="1510" y="485.98" width="6" height="1.2" fill="#dcdcaa"/><rect x="1517" y="485.98" width="1" height="1.2" fill="#d4d4d4"/><rect x="1519" y="485.98" width="13" height="1.2" fill="#9cdcfe"/><rect x="1533" y="485.98" width="2" height="1.2" fill="#d4d4d4"/><rect x="1536" y="485.98" width="6" height="1.2" fill="#569cd6"/><rect x="1543" y="485.98" width="3" height="1.2" fill="#d4d4d4"/><rect x="1504" y="488.02" width="20" height="1.2" fill="#6a9955"/><rect x="1504" y="490.06" width="9" height="1.2" fill="#9cdcfe"/><rect x="1514" y="490.06" width="3" height="1.2" fill="#d4d4d4"/><rect x="1518" y="490.06" width="13" height="1.2" fill="#dcdcaa"/><rect x="1532" y="490.06" width="1" height="1.2" fill="#d4d4d4"/><rect x="1534" y="490.06" width="12" height="1.2" fill="#9cdcfe"/><rect x="1547" y="490.06" width="2" height="1.2" fill="#d4d4d4"/><rect x="1504" y="492.10" width="11" height="1.2" fill="#9cdcfe"/><rect x="1516" y="492.10" width="3" height="1.2" fill="#d4d4d4"/><rect x="1520" y="492.10" width="12" height="1.2" fill="#dcdcaa"/><rect x="1533" y="492.10" width="1" height="1.2" fill="#d4d4d4"/><rect x="1535" y="492.10" width="6" height="1.2" fill="#ce9178"/><rect x="1542" y="492.10" width="4" height="1.2" fill="#ce9178"/><rect x="1547" y="492.10" width="3" height="1.2" fill="#ce9178"/><rect x="1551" y="492.10" width="1" height="1.2" fill="#ce9178"/><rect x="1553" y="492.10" width="10" height="1.2" fill="#9cdcfe"/><rect x="1564" y="492.10" width="2" height="1.2" fill="#d4d4d4"/><rect x="1504" y="494.14" width="10" height="1.2" fill="#dcdcaa"/><rect x="1515" y="494.14" width="1" height="1.2" fill="#d4d4d4"/><rect x="1517" y="494.14" width="8" height="1.2" fill="#ce9178"/><rect x="1526" y="494.14" width="5" height="1.2" fill="#ce9178"/><rect x="1532" y="494.14" width="7" height="1.2" fill="#ce9178"/><rect x="1540" y="494.14" width="6" height="1.2" fill="#ce9178"/><rect x="1547" y="494.14" width="3" height="1.2" fill="#ce9178"/><rect x="1551" y="494.14" width="3" height="1.2" fill="#d4d4d4"/><rect x="1504" y="496.18" width="8" height="1.2" fill="#dcdcaa"/><rect x="1513" y="496.18" width="1" height="1.2" fill="#d4d4d4"/><rect x="1515" y="496.18" width="4" height="1.2" fill="#ce9178"/><rect x="1520" y="496.18" width="4" height="1.2" fill="#ce9178"/><rect x="1525" y="496.18" width="8" height="1.2" fill="#ce9178"/><rect x="1534" y="496.18" width="8" height="1.2" fill="#ce9178"/><rect x="1543" y="496.18" width="5" height="1.2" fill="#ce9178"/><rect x="1549" y="496.18" width="3" height="1.2" fill="#d4d4d4"/><rect x="1500" y="498.22" width="1" height="1.2" fill="#d4d4d4"/><rect x="1500" y="502.30" width="8" height="1.2" fill="#569cd6"/><rect x="1509" y="502.30" width="10" height="1.2" fill="#dcdcaa"/><rect x="1520" y="502.30" width="4" height="1.2" fill="#d4d4d4"/><rect x="1504" y="504.34" width="2" height="1.2" fill="#c586c0"/><rect x="1507" y="504.34" width="2" height="1.2" fill="#d4d4d4"/><rect x="1510" y="504.34" width="14" height="1.2" fill="#dcdcaa"/><rect x="1525" y="504.34" width="1" height="1.2" fill="#d4d4d4"/><rect x="1527" y="504.34" width="5" height="1.2" fill="#9cdcfe"/><rect x="1533" y="504.34" width="3" height="1.2" fill="#d4d4d4"/><rect x="1537" y="504.34" width="3" height="1.2" fill="#d4d4d4"/><rect x="1508" y="506.38" width="2" height="1.2" fill="#c586c0"/><rect x="1511" y="506.38" width="2" height="1.2" fill="#d4d4d4"/><rect x="1514" y="506.38" width="11" height="1.2" fill="#dcdcaa"/><rect x="1526" y="506.38" width="1" height="1.2" fill="#d4d4d4"/><rect x="1528" y="506.38" width="5" height="1.2" fill="#9cdcfe"/><rect x="1534" y="506.38" width="4" height="1.2" fill="#d4d4d4"/><rect x="1539" y="506.38" width="3" height="1.2" fill="#d4d4d4"/><rect x="1512" y="508.42" width="5" height="1.2" fill="#9cdcfe"/><rect x="1518" y="508.42" width="3" height="1.2" fill="#d4d4d4"/><rect x="1522" y="508.42" width="7" height="1.2" fill="#dcdcaa"/><rect x="1530" y="508.42" width="1" height="1.2" fill="#d4d4d4"/><rect x="1532" y="508.42" width="7" height="1.2" fill="#9cdcfe"/><rect x="1540" y="508.42" width="2" height="1.2" fill="#d4d4d4"/><rect x="1512" y="510.46" width="1" height="1.2" fill="#d4d4d4"/><rect x="1512" y="512.50" width="22" height="1.2" fill="#6a9955"/><rect x="1512" y="514.54" width="11" height="1.2" fill="#9cdcfe"/><rect x="1524" y="514.54" width="3" height="1.2" fill="#d4d4d4"/><rect x="1528" y="514.54" width="8" height="1.2" fill="#dcdcaa"/><rect x="1537" y="514.54" width="1" height="1.2" fill="#d4d4d4"/><rect x="1539" y="514.54" width="7" height="1.2" fill="#ce9178"/><rect x="1547" y="514.54" width="3" height="1.2" fill="#ce9178"/><rect x="1551" y="514.54" width="3" height="1.2" fill="#ce9178"/><rect x="1555" y="514.54" width="3" height="1.2" fill="#9cdcfe"/><rect x="1559" y="514.54" width="2" height="1.2" fill="#d4d4d4"/><rect x="1508" y="516.58" width="1" height="1.2" fill="#d4d4d4"/><rect x="1508" y="518.62" width="2" height="1.2" fill="#c586c0"/><rect x="1511" y="518.62" width="2" height="1.2" fill="#d4d4d4"/><rect x="1514" y="518.62" width="6" height="1.2" fill="#dcdcaa"/><rect x="1521" y="518.62" width="1" height="1.2" fill="#d4d4d4"/><rect x="1523" y="518.62" width="8" height="1.2" fill="#9cdcfe"/><rect x="1532" y="518.62" width="2" height="1.2" fill="#d4d4d4"/><rect x="1535" y="518.62" width="5" height="1.2" fill="#569cd6"/><rect x="1541" y="518.62" width="3" height="1.2" fill="#d4d4d4"/><rect x="1508" y="520.66" width="11" height="1.2" fill="#9cdcfe"/><rect x="1520" y="520.66" width="3" height="1.2" fill="#d4d4d4"/><rect x="1524" y="520.66" width="8" height="1.2" fill="#dcdcaa"/><rect x="1533" y="520.66" width="1" height="1.2" fill="#d4d4d4"/><rect x="1535" y="520.66" width="3" height="1.2" fill="#ce9178"/><rect x="1539" y="520.66" width="7" height="1.2" fill="#ce9178"/><rect x="1547" y="520.66" width="4" height="1.2" fill="#ce9178"/><rect x="1552" y="520.66" width="3" height="1.2" fill="#ce9178"/><rect x="1556" y="520.66" width="7" height="1.2" fill="#ce9178"/><rect x="1565" y="520.66" width="7" height="1.2" fill="#9cdcfe"/><rect x="1508" y="522.70" width="10" height="1.2" fill="#dcdcaa"/><rect x="1519" y="522.70" width="1" height="1.2" fill="#d4d4d4"/><rect x="1521" y="522.70" width="7" height="1.2" fill="#ce9178"/><rect x="1529" y="522.70" width="6" height="1.2" fill="#ce9178"/><rect x="1536" y="522.70" width="3" height="1.2" fill="#ce9178"/><rect x="1540" y="522.70" width="5" height="1.2" fill="#ce9178"/><rect x="1546" y="522.70" width="4" height="1.2" fill="#ce9178"/><rect x="1551" y="522.70" width="8" height="1.2" fill="#ce9178"/><rect x="1560" y="522.70" width="2" height="1.2" fill="#ce9178"/><rect x="1563" y="522.70" width="3" height="1.2" fill="#d4d4d4"/><rect x="1504" y="524.74" width="1" height="1.2" fill="#d4d4d4"/><rect x="1504" y="526.78" width="7" height="1.2" fill="#9cdcfe"/><rect x="1512" y="526.78" width="3" height="1.2" fill="#d4d4d4"/><rect x="1516" y="526.78" width="13" height="1.2" fill="#9cdcfe"/><rect x="1530" y="526.78" width="1" height="1.2" fill="#d4d4d4"/><rect x="1504" y="528.82" width="2" height="1.2" fill="#c586c0"/><rect x="1507" y="528.82" width="2" height="1.2" fill="#d4d4d4"/><rect x="1510" y="528.82" width="8" height="1.2" fill="#dcdcaa"/><rect x="1519" y="528.82" width="1" height="1.2" fill="#d4d4d4"/><rect x="1521" y="528.82" width="12" height="1.2" fill="#9cdcfe"/><rect x="1534" y="528.82" width="2" height="1.2" fill="#d4d4d4"/><rect x="1537" y="528.82" width="3" height="1.2" fill="#d4d4d4"/><rect x="1508" y="530.86" width="2" height="1.2" fill="#c586c0"/><rect x="1511" y="530.86" width="2" height="1.2" fill="#d4d4d4"/><rect x="1514" y="530.86" width="14" height="1.2" fill="#dcdcaa"/><rect x="1529" y="530.86" width="1" height="1.2" fill="#d4d4d4"/><rect x="1531" y="530.86" width="10" height="1.2" fill="#9cdcfe"/><rect x="1542" y="530.86" width="4" height="1.2" fill="#d4d4d4"/><rect x="1547" y="530.86" width="3" height="1.2" fill="#d4d4d4"/><rect x="1512" y="532.90" width="4" height="1.2" fill="#c586c0"/><rect x="1517" y="532.90" width="1" height="1.2" fill="#d4d4d4"/><rect x="1519" y="532.90" width="3" height="1.2" fill="#ce9178"/><rect x="1523" y="532.90" width="5" height="1.2" fill="#ce9178"/><rect x="1529" y="532.90" width="1" height="1.2" fill="#d4d4d4"/><rect x="1512" y="534.94" width="2" height="1.2" fill="#c586c0"/><rect x="1515" y="534.94" width="2" height="1.2" fill="#d4d4d4"/><rect x="1518" y="534.94" width="8" height="1.2" fill="#dcdcaa"/><rect x="1527" y="534.94" width="1" height="1.2" fill="#d4d4d4"/><rect x="1529" y="534.94" width="8" height="1.2" fill="#9cdcfe"/><rect x="1538" y="534.94" width="3" height="1.2" fill="#d4d4d4"/><rect x="1542" y="534.94" width="3" height="1.2" fill="#d4d4d4"/><rect x="1516" y="539.02" width="8" height="1.2" fill="#9cdcfe"/><rect x="1525" y="539.02" width="3" height="1.2" fill="#d4d4d4"/><rect x="1529" y="539.02" width="10" height="1.2" fill="#dcdcaa"/><rect x="1540" y="539.02" width="1" height="1.2" fill="#d4d4d4"/><rect x="1542" y="539.02" width="4" height="1.2" fill="#ce9178"/><rect x="1547" y="539.02" width="3" height="1.2" fill="#ce9178"/><rect x="1551" y="539.02" width="6" height="1.2" fill="#ce9178"/><rect x="1558" y="539.02" width="5" height="1.2" fill="#ce9178"/><rect x="1564" y="539.02" width="2" height="1.2" fill="#9cdcfe"/><rect x="1567" y="539.02" width="2" height="1.2" fill="#d4d4d4"/><rect x="1512" y="541.06" width="1" height="1.2" fill="#d4d4d4"/><rect x="1512" y="543.10" width="2" height="1.2" fill="#c586c0"/><rect x="1515" y="543.10" width="2" height="1.2" fill="#d4d4d4"/><rect x="1518" y="543.10" width="6" height="1.2" fill="#dcdcaa"/><rect x="1525" y="543.10" width="1" height="1.2" fill="#d4d4d4"/><rect x="1527" y="543.10" width="8" height="1.2" fill="#9cdcfe"/><rect x="1536" y="543.10" width="4" height="1.2" fill="#d4d4d4"/><rect x="1541" y="543.10" width="3" height="1.2" fill="#d4d4d4"/><rect x="1516" y="545.14" width="2" height="1.2" fill="#c586c0"/><rect x="1519" y="545.14" width="2" height="1.2" fill="#d4d4d4"/><rect x="1522" y="545.14" width="7" height="1.2" fill="#dcdcaa"/><rect x="1530" y="545.14" width="1" height="1.2" fill="#d4d4d4"/><rect x="1532" y="545.14" width="13" height="1.2" fill="#9cdcfe"/><rect x="1546" y="545.14" width="3" height="1.2" fill="#d4d4d4"/><rect x="1550" y="545.14" width="3" height="1.2" fill="#d4d4d4"/><rect x="1520" y="547.18" width="2" height="1.2" fill="#c586c0"/><rect x="1523" y="547.18" width="2" height="1.2" fill="#d4d4d4"/><rect x="1526" y="547.18" width="10" height="1.2" fill="#dcdcaa"/><rect x="1537" y="547.18" width="1" height="1.2" fill="#d4d4d4"/><rect x="1539" y="547.18" width="10" height="1.2" fill="#9cdcfe"/><rect x="1550" y="547.18" width="5" height="1.2" fill="#d4d4d4"/><rect x="1556" y="547.18" width="8" height="1.2" fill="#569cd6"/><rect x="1565" y="547.18" width="3" height="1.2" fill="#d4d4d4"/><rect x="1520" y="549.22" width="9" height="1.2" fill="#9cdcfe"/><rect x="1530" y="549.22" width="3" height="1.2" fill="#d4d4d4"/><rect x="1534" y="549.22" width="7" height="1.2" fill="#dcdcaa"/><rect x="1542" y="549.22" width="1" height="1.2" fill="#d4d4d4"/><rect x="1544" y="549.22" width="11" height="1.2" fill="#9cdcfe"/><rect x="1556" y="549.22" width="2" height="1.2" fill="#d4d4d4"/><rect x="1516" y="553.30" width="1" height="1.2" fill="#d4d4d4"/><rect x="1512" y="555.34" width="1" height="1.2" fill="#d4d4d4"/><rect x="1508" y="557.38" width="1" height="1.2" fill="#d4d4d4"/><rect x="1508" y="559.42" width="2" height="1.2" fill="#c586c0"/><rect x="1511" y="559.42" width="2" height="1.2" fill="#d4d4d4"/><rect x="1514" y="559.42" width="8" height="1.2" fill="#dcdcaa"/><rect x="1523" y="559.42" width="1" height="1.2" fill="#d4d4d4"/><rect x="1525" y="559.42" width="12" height="1.2" fill="#9cdcfe"/><rect x="1538" y="559.42" width="5" height="1.2" fill="#d4d4d4"/><rect x="1544" y="559.42" width="3" height="1.2" fill="#d4d4d4"/><rect x="1512" y="561.46" width="6" height="1.2" fill="#9cdcfe"/><rect x="1519" y="561.46" width="3" height="1.2" fill="#d4d4d4"/><rect x="1523" y="561.46" width="16" height="1.2" fill="#dcdcaa"/><rect x="1540" y="561.46" width="1" height="1.2" fill="#d4d4d4"/><rect x="1542" y="561.46" width="7" height="1.2" fill="#ce9178"/><rect x="1550" y="561.46" width="6" height="1.2" fill="#ce9178"/><rect x="1557" y="561.46" width="4" height="1.2" fill="#ce9178"/><rect x="1562" y="561.46" width="5" height="1.2" fill="#ce9178"/><rect x="1568" y="561.46" width="1" height="1.2" fill="#ce9178"/><rect x="1570" y="561.46" width="2" height="1.2" fill="#9cdcfe"/><rect x="1512" y="563.50" width="7" height="1.2" fill="#9cdcfe"/><rect x="1520" y="563.50" width="3" height="1.2" fill="#d4d4d4"/><rect x="1524" y="563.50" width="17" height="1.2" fill="#9cdcfe"/><rect x="1542" y="563.50" width="1" height="1.2" fill="#d4d4d4"/><rect x="1512" y="565.54" width="2" height="1.2" fill="#c586c0"/><rect x="1515" y="565.54" width="2" height="1.2" fill="#d4d4d4"/><rect x="1518" y="565.54" width="14" height="1.2" fill="#dcdcaa"/><rect x="1533" y="565.54" width="1" height="1.2" fill="#d4d4d4"/><rect x="1535" y="565.54" width="6" height="1.2" fill="#9cdcfe"/><rect x="1542" y="565.54" width="5" height="1.2" fill="#d4d4d4"/><rect x="1548" y="565.54" width="3" height="1.2" fill="#d4d4d4"/><rect x="1516" y="567.58" width="11" height="1.2" fill="#9cdcfe"/><rect x="1528" y="567.58" width="3" height="1.2" fill="#d4d4d4"/><rect x="1532" y="567.58" width="16" height="1.2" fill="#dcdcaa"/><rect x="1549" y="567.58" width="1" height="1.2" fill="#d4d4d4"/><rect x="1551" y="567.58" width="7" height="1.2" fill="#ce9178"/><rect x="1559" y="567.58" width="4" height="1.2" fill="#ce9178"/><rect x="1564" y="567.58" width="3" height="1.2" fill="#ce9178"/><rect x="1568" y="567.58" width="4" height="1.2" fill="#ce9178"/><rect x="1516" y="571.66" width="10" height="1.2" fill="#dcdcaa"/><rect x="1527" y="571.66" width="1" height="1.2" fill="#d4d4d4"/><rect x="1529" y="571.66" width="3" height="1.2" fill="#ce9178"/><rect x="1533" y="571.66" width="6" height="1.2" fill="#ce9178"/><rect x="1540" y="571.66" width="5" height="1.2" fill="#ce9178"/><rect x="1546" y="571.66" width="3" height="1.2" fill="#ce9178"/><rect x="1550" y="571.66" width="3" height="1.2" fill="#d4d4d4"/><rect x="1512" y="573.70" width="1" height="1.2" fill="#d4d4d4"/><rect x="1508" y="575.74" width="1" height="1.2" fill="#d4d4d4"/><rect x="1508" y="577.78" width="2" height="1.2" fill="#c586c0"/><rect x="1511" y="577.78" width="2" height="1.2" fill="#d4d4d4"/><rect x="1514" y="577.78" width="12" height="1.2" fill="#dcdcaa"/><rect x="1527" y="577.78" width="1" height="1.2" fill="#d4d4d4"/><rect x="1529" y="577.78" width="10" height="1.2" fill="#9cdcfe"/><rect x="1540" y="577.78" width="4" height="1.2" fill="#d4d4d4"/><rect x="1545" y="577.78" width="3" height="1.2" fill="#d4d4d4"/><rect x="1512" y="579.82" width="25" height="1.2" fill="#6a9955"/><rect x="1512" y="581.86" width="11" height="1.2" fill="#9cdcfe"/><rect x="1524" y="581.86" width="3" height="1.2" fill="#d4d4d4"/><rect x="1528" y="581.86" width="15" height="1.2" fill="#dcdcaa"/><rect x="1544" y="581.86" width="1" height="1.2" fill="#d4d4d4"/><rect x="1546" y="581.86" width="5" height="1.2" fill="#ce9178"/><rect x="1552" y="581.86" width="6" height="1.2" fill="#ce9178"/><rect x="1559" y="581.86" width="4" height="1.2" fill="#ce9178"/><rect x="1564" y="581.86" width="6" height="1.2" fill="#ce9178"/><rect x="1571" y="581.86" width="1" height="1.2" fill="#ce9178"/><rect x="1508" y="583.90" width="1" height="1.2" fill="#d4d4d4"/><rect x="1504" y="585.94" width="1" height="1.2" fill="#d4d4d4"/><rect x="1504" y="587.98" width="5" height="1.2" fill="#9cdcfe"/><rect x="1510" y="587.98" width="3" height="1.2" fill="#d4d4d4"/><rect x="1514" y="587.98" width="13" height="1.2" fill="#dcdcaa"/><rect x="1528" y="587.98" width="1" height="1.2" fill="#d4d4d4"/><rect x="1530" y="587.98" width="9" height="1.2" fill="#9cdcfe"/><rect x="1540" y="587.98" width="2" height="1.2" fill="#d4d4d4"/><rect x="1500" y="590.02" width="1" height="1.2" fill="#d4d4d4"/><rect x="1500" y="594.10" width="8" height="1.2" fill="#569cd6"/><rect x="1509" y="594.10" width="17" height="1.2" fill="#dcdcaa"/><rect x="1527" y="594.10" width="4" height="1.2" fill="#d4d4d4"/><rect x="1504" y="596.14" width="38" height="1.2" fill="#6a9955"/><rect x="1504" y="600.22" width="2" height="1.2" fill="#c586c0"/><rect x="1507" y="600.22" width="2" height="1.2" fill="#d4d4d4"/><rect x="1510" y="600.22" width="10" height="1.2" fill="#dcdcaa"/><rect x="1521" y="600.22" width="1" height="1.2" fill="#d4d4d4"/><rect x="1523" y="600.22" width="5" height="1.2" fill="#9cdcfe"/><rect x="1529" y="600.22" width="4" height="1.2" fill="#d4d4d4"/><rect x="1534" y="600.22" width="8" height="1.2" fill="#569cd6"/><rect x="1543" y="600.22" width="3" height="1.2" fill="#d4d4d4"/><rect x="1504" y="602.26" width="2" height="1.2" fill="#c586c0"/><rect x="1507" y="602.26" width="2" height="1.2" fill="#d4d4d4"/><rect x="1510" y="602.26" width="8" height="1.2" fill="#dcdcaa"/><rect x="1519" y="602.26" width="1" height="1.2" fill="#d4d4d4"/><rect x="1521" y="602.26" width="14" height="1.2" fill="#9cdcfe"/><rect x="1536" y="602.26" width="4" height="1.2" fill="#d4d4d4"/><rect x="1541" y="602.26" width="6" height="1.2" fill="#569cd6"/><rect x="1548" y="602.26" width="3" height="1.2" fill="#d4d4d4"/><rect x="1504" y="604.30" width="7" height="1.2" fill="#9cdcfe"/><rect x="1512" y="604.30" width="3" height="1.2" fill="#d4d4d4"/><rect x="1516" y="604.30" width="8" height="1.2" fill="#dcdcaa"/><rect x="1525" y="604.30" width="1" height="1.2" fill="#d4d4d4"/><rect x="1527" y="604.30" width="6" height="1.2" fill="#9cdcfe"/><rect x="1534" y="604.30" width="2" height="1.2" fill="#d4d4d4"/><rect x="1504" y="606.34" width="2" height="1.2" fill="#c586c0"/><rect x="1507" y="606.34" width="2" height="1.2" fill="#d4d4d4"/><rect x="1510" y="606.34" width="9" height="1.2" fill="#dcdcaa"/><rect x="1520" y="606.34" width="1" height="1.2" fill="#d4d4d4"/><rect x="1522" y="606.34" width="5" height="1.2" fill="#9cdcfe"/><rect x="1528" y="606.34" width="3" height="1.2" fill="#d4d4d4"/><rect x="1532" y="606.34" width="7" height="1.2" fill="#569cd6"/><rect x="1540" y="606.34" width="3" height="1.2" fill="#d4d4d4"/><rect x="1504" y="608.38" width="8" height="1.2" fill="#9cdcfe"/><rect x="1513" y="608.38" width="3" height="1.2" fill="#d4d4d4"/><rect x="1517" y="608.38" width="6" height="1.2" fill="#dcdcaa"/><rect x="1524" y="608.38" width="1" height="1.2" fill="#d4d4d4"/><rect x="1526" y="608.38" width="4" height="1.2" fill="#ce9178"/><rect x="1531" y="608.38" width="5" height="1.2" fill="#ce9178"/><rect x="1537" y="608.38" width="8" height="1.2" fill="#ce9178"/><rect x="1546" y="608.38" width="3" height="1.2" fill="#ce9178"/><rect x="1550" y="608.38" width="4" height="1.2" fill="#ce9178"/><rect x="1555" y="608.38" width="8" height="1.2" fill="#9cdcfe"/><rect x="1564" y="608.38" width="2" height="1.2" fill="#d4d4d4"/><rect x="1504" y="610.42" width="1" height="1.2" fill="#d4d4d4"/><rect x="1504" y="612.46" width="2" height="1.2" fill="#c586c0"/><rect x="1507" y="612.46" width="2" height="1.2" fill="#d4d4d4"/><rect x="1510" y="612.46" width="6" height="1.2" fill="#dcdcaa"/><rect x="1517" y="612.46" width="1" height="1.2" fill="#d4d4d4"/><rect x="1519" y="612.46" width="10" height="1.2" fill="#9cdcfe"/><rect x="1530" y="612.46" width="2" height="1.2" fill="#d4d4d4"/><rect x="1533" y="612.46" width="3" height="1.2" fill="#d4d4d4"/><rect x="1508" y="614.50" width="2" height="1.2" fill="#c586c0"/><rect x="1511" y="614.50" width="2" height="1.2" fill="#d4d4d4"/><rect x="1514" y="614.50" width="10" height="1.2" fill="#dcdcaa"/><rect x="1525" y="614.50" width="1" height="1.2" fill="#d4d4d4"/><rect x="1527" y="614.50" width="6" height="1.2" fill="#9cdcfe"/><rect x="1534" y="614.50" width="2" height="1.2" fill="#d4d4d4"/><rect x="1537" y="614.50" width="3" height="1.2" fill="#d4d4d4"/><rect x="1512" y="616.54" width="6" height="1.2" fill="#9cdcfe"/><rect x="1519" y="616.54" width="3" height="1.2" fill="#d4d4d4"/><rect x="1523" y="616.54" width="9" height="1.2" fill="#dcdcaa"/><rect x="1533" y="616.54" width="1" height="1.2" fill="#d4d4d4"/><rect x="1535" y="616.54" width="7" height="1.2" fill="#9cdcfe"/><rect x="1543" y="616.54" width="2" height="1.2" fill="#d4d4d4"/><rect x="1512" y="618.58" width="5" height="1.2" fill="#9cdcfe"/><rect x="1518" y="618.58" width="3" height="1.2" fill="#d4d4d4"/><rect x="1522" y="618.58" width="13" height="1.2" fill="#dcdcaa"/><rect x="1536" y="618.58" width="1" height="1.2" fill="#d4d4d4"/><rect x="1538" y="618.58" width="10" height="1.2" fill="#9cdcfe"/><rect x="1549" y="618.58" width="2" height="1.2" fill="#d4d4d4"/><rect x="1508" y="620.62" width="1" height="1.2" fill="#d4d4d4"/><rect x="1508" y="622.66" width="5" height="1.2" fill="#9cdcfe"/><rect x="1514" y="622.66" width="3" height="1.2" fill="#d4d4d4"/><rect x="1518" y="622.66" width="16" height="1.2" fill="#dcdcaa"/><rect x="1535" y="622.66" width="1" height="1.2" fill="#d4d4d4"/><rect x="1537" y="622.66" width="6" height="1.2" fill="#9cdcfe"/><rect x="1544" y="622.66" width="2" height="1.2" fill="#d4d4d4"/><rect x="1508" y="624.70" width="1" height="1.2" fill="#d4d4d4"/><rect x="1504" y="626.74" width="1" height="1.2" fill="#d4d4d4"/><rect x="1504" y="628.78" width="2" height="1.2" fill="#c586c0"/><rect x="1507" y="628.78" width="2" height="1.2" fill="#d4d4d4"/><rect x="1510" y="628.78" width="14" height="1.2" fill="#dcdcaa"/><rect x="1525" y="628.78" width="1" height="1.2" fill="#d4d4d4"/><rect x="1527" y="628.78" width="5" height="1.2" fill="#9cdcfe"/><rect x="1533" y="628.78" width="5" height="1.2" fill="#d4d4d4"/><rect x="1539" y="628.78" width="3" height="1.2" fill="#d4d4d4"/><rect x="1508" y="632.86" width="2" height="1.2" fill="#c586c0"/><rect x="1511" y="632.86" width="2" height="1.2" fill="#d4d4d4"/><rect x="1514" y="632.86" width="6" height="1.2" fill="#dcdcaa"/><rect x="1521" y="632.86" width="1" height="1.2" fill="#d4d4d4"/><rect x="1523" y="632.86" width="12" height="1.2" fill="#9cdcfe"/><rect x="1536" y="632.86" width="2" height="1.2" fill="#d4d4d4"/><rect x="1539" y="632.86" width="3" height="1.2" fill="#d4d4d4"/><rect x="1512" y="634.90" width="2" height="1.2" fill="#c586c0"/><rect x="1515" y="634.90" width="2" height="1.2" fill="#d4d4d4"/><rect x="1518" y="634.90" width="6" height="1.2" fill="#dcdcaa"/><rect x="1525" y="634.90" width="1" height="1.2" fill="#d4d4d4"/><rect x="1527" y="634.90" width="11" height="1.2" fill="#9cdcfe"/><rect x="1539" y="634.90" width="5" height="1.2" fill="#d4d4d4"/><rect x="1545" y="634.90" width="3" height="1.2" fill="#d4d4d4"/><rect x="1516" y="636.94" width="10" height="1.2" fill="#9cdcfe"/><rect x="1527" y="636.94" width="3" height="1.2" fill="#d4d4d4"/><rect x="1531" y="636.94" width="16" height="1.2" fill="#dcdcaa"/><rect x="1548" y="636.94" width="1" height="1.2" fill="#d4d4d4"/><rect x="1550" y="636.94" width="5" height="1.2" fill="#ce9178"/><rect x="1556" y="636.94" width="5" height="1.2" fill="#ce9178"/><rect x="1562" y="636.94" width="1" height="1.2" fill="#ce9178"/><rect x="1564" y="636.94" width="7" height="1.2" fill="#9cdcfe"/><rect x="1516" y="638.98" width="2" height="1.2" fill="#c586c0"/><rect x="1519" y="638.98" width="2" height="1.2" fill="#d4d4d4"/><rect x="1522" y="638.98" width="9" height="1.2" fill="#dcdcaa"/><rect x="1532" y="638.98" width="1" height="1.2" fill="#d4d4d4"/><rect x="1534" y="638.98" width="9" height="1.2" fill="#9cdcfe"/><rect x="1544" y="638.98" width="2" height="1.2" fill="#d4d4d4"/><rect x="1547" y="638.98" width="6" height="1.2" fill="#569cd6"/><rect x="1554" y="638.98" width="3" height="1.2" fill="#d4d4d4"/><rect x="1512" y="641.02" width="1" height="1.2" fill="#d4d4d4"/><rect x="1512" y="643.06" width="6" height="1.2" fill="#9cdcfe"/><rect x="1519" y="643.06" width="3" height="1.2" fill="#d4d4d4"/><rect x="1523" y="643.06" width="18" height="1.2" fill="#dcdcaa"/><rect x="1542" y="643.06" width="1" height="1.2" fill="#d4d4d4"/><rect x="1544" y="643.06" width="3" height="1.2" fill="#ce9178"/><rect x="1548" y="643.06" width="4" height="1.2" fill="#ce9178"/><rect x="1553" y="643.06" width="4" height="1.2" fill="#ce9178"/><rect x="1558" y="643.06" width="2" height="1.2" fill="#9cdcfe"/><rect x="1561" y="643.06" width="2" height="1.2" fill="#d4d4d4"/><rect x="1512" y="645.10" width="2" height="1.2" fill="#c586c0"/><rect x="1515" y="645.10" width="2" height="1.2" fill="#d4d4d4"/><rect x="1518" y="645.10" width="5" height="1.2" fill="#dcdcaa"/><rect x="1524" y="645.10" width="1" height="1.2" fill="#d4d4d4"/><rect x="1526" y="645.10" width="14" height="1.2" fill="#9cdcfe"/><rect x="1541" y="645.10" width="5" height="1.2" fill="#d4d4d4"/><rect x="1547" y="645.10" width="3" height="1.2" fill="#d4d4d4"/><rect x="1516" y="647.14" width="8" height="1.2" fill="#dcdcaa"/><rect x="1525" y="647.14" width="1" height="1.2" fill="#d4d4d4"/><rect x="1527" y="647.14" width="8" height="1.2" fill="#ce9178"/><rect x="1536" y="647.14" width="7" height="1.2" fill="#ce9178"/><rect x="1544" y="647.14" width="4" height="1.2" fill="#ce9178"/><rect x="1549" y="647.14" width="6" height="1.2" fill="#ce9178"/><rect x="1556" y="647.14" width="3" height="1.2" fill="#d4d4d4"/><rect x="1512" y="649.18" width="1" height="1.2" fill="#d4d4d4"/><rect x="1508" y="651.22" width="1" height="1.2" fill="#d4d4d4"/><rect x="1508" y="653.26" width="6" height="1.2" fill="#c586c0"/><rect x="1515" y="653.26" width="1" height="1.2" fill="#d4d4d4"/><rect x="1517" y="653.26" width="7" height="1.2" fill="#569cd6"/><rect x="1525" y="653.26" width="1" height="1.2" fill="#d4d4d4"/><rect x="1504" y="655.30" width="1" height="1.2" fill="#d4d4d4"/><rect x="1500" y="657.34" width="1" height="1.2" fill="#d4d4d4"/><rect x="1500" y="661.42" width="8" height="1.2" fill="#569cd6"/><rect x="1509" y="661.42" width="26" height="1.2" fill="#dcdcaa"/><rect x="1536" y="661.42" width="4" height="1.2" fill="#d4d4d4"/><rect x="1504" y="663.46" width="6" height="1.2" fill="#9cdcfe"/><rect x="1511" y="663.46" width="3" height="1.2" fill="#d4d4d4"/><rect x="1515" y="663.46" width="8" height="1.2" fill="#dcdcaa"/><rect x="1524" y="663.46" width="1" height="1.2" fill="#d4d4d4"/><rect x="1526" y="663.46" width="8" height="1.2" fill="#9cdcfe"/><rect x="1535" y="663.46" width="2" height="1.2" fill="#d4d4d4"/><rect x="1504" y="665.50" width="2" height="1.2" fill="#c586c0"/><rect x="1507" y="665.50" width="2" height="1.2" fill="#d4d4d4"/><rect x="1510" y="665.50" width="13" height="1.2" fill="#dcdcaa"/><rect x="1524" y="665.50" width="1" height="1.2" fill="#d4d4d4"/><rect x="1526" y="665.50" width="12" height="1.2" fill="#9cdcfe"/><rect x="1539" y="665.50" width="4" height="1.2" fill="#d4d4d4"/><rect x="1544" y="665.50" width="3" height="1.2" fill="#d4d4d4"/><rect x="1508" y="669.58" width="25" height="1.2" fill="#6a9955"/><rect x="1508" y="671.62" width="2" height="1.2" fill="#c586c0"/><rect x="1511" y="671.62" width="2" height="1.2" fill="#d4d4d4"/><rect x="1514" y="671.62" width="6" height="1.2" fill="#dcdcaa"/><rect x="1521" y="671.62" width="1" height="1.2" fill="#d4d4d4"/><rect x="1523" y="671.62" width="12" height="1.2" fill="#9cdcfe"/><rect x="1536" y="671.62" width="3" height="1.2" fill="#d4d4d4"/><rect x="1540" y="671.62" width="3" height="1.2" fill="#d4d4d4"/><rect x="1512" y="673.66" width="9" height="1.2" fill="#9cdcfe"/><rect x="1522" y="673.66" width="3" height="1.2" fill="#d4d4d4"/><rect x="1526" y="673.66" width="12" height="1.2" fill="#dcdcaa"/><rect x="1539" y="673.66" width="1" height="1.2" fill="#d4d4d4"/><rect x="1541" y="673.66" width="12" height="1.2" fill="#9cdcfe"/><rect x="1554" y="673.66" width="2" height="1.2" fill="#d4d4d4"/><rect x="1512" y="675.70" width="2" height="1.2" fill="#c586c0"/><rect x="1515" y="675.70" width="2" height="1.2" fill="#d4d4d4"/><rect x="1518" y="675.70" width="9" height="1.2" fill="#dcdcaa"/><rect x="1528" y="675.70" width="1" height="1.2" fill="#d4d4d4"/><rect x="1530" y="675.70" width="5" height="1.2" fill="#9cdcfe"/><rect x="1536" y="675.70" width="3" height="1.2" fill="#d4d4d4"/><rect x="1540" y="675.70" width="3" height="1.2" fill="#d4d4d4"/><rect x="1512" y="679.78" width="1" height="1.2" fill="#d4d4d4"/><rect x="1512" y="681.82" width="29" height="1.2" fill="#6a9955"/><rect x="1512" y="683.86" width="2" height="1.2" fill="#c586c0"/><rect x="1515" y="683.86" width="2" height="1.2" fill="#d4d4d4"/><rect x="1518" y="683.86" width="11" height="1.2" fill="#dcdcaa"/><rect x="1530" y="683.86" width="1" height="1.2" fill="#d4d4d4"/><rect x="1532" y="683.86" width="14" height="1.2" fill="#9cdcfe"/><rect x="1547" y="683.86" width="3" height="1.2" fill="#d4d4d4"/><rect x="1551" y="683.86" width="3" height="1.2" fill="#d4d4d4"/><rect x="1516" y="685.90" width="8" height="1.2" fill="#dcdcaa"/><rect x="1525" y="685.90" width="1" height="1.2" fill="#d4d4d4"/><rect x="1527" y="685.90" width="8" height="1.2" fill="#ce9178"/><rect x="1536" y="685.90" width="4" height="1.2" fill="#ce9178"/><rect x="1541" y="685.90" width="4" height="1.2" fill="#ce9178"/><rect x="1546" y="685.90" width="3" height="1.2" fill="#ce9178"/><rect x="1550" y="685.90" width="8" height="1.2" fill="#ce9178"/><rect x="1559" y="685.90" width="3" height="1.2" fill="#ce9178"/><rect x="1563" y="685.90" width="5" height="1.2" fill="#ce9178"/><rect x="1569" y="685.90" width="3" height="1.2" fill="#ce9178"/><rect x="1516" y="687.94" width="9" height="1.2" fill="#9cdcfe"/><rect x="1526" y="687.94" width="3" height="1.2" fill="#d4d4d4"/><rect x="1530" y="687.94" width="20" height="1.2" fill="#9cdcfe"/><rect x="1551" y="687.94" width="1" height="1.2" fill="#d4d4d4"/><rect x="1516" y="689.98" width="6" height="1.2" fill="#9cdcfe"/><rect x="1523" y="689.98" width="3" height="1.2" fill="#d4d4d4"/><rect x="1527" y="689.98" width="6" height="1.2" fill="#dcdcaa"/><rect x="1534" y="689.98" width="1" height="1.2" fill="#d4d4d4"/><rect x="1536" y="689.98" width="5" height="1.2" fill="#ce9178"/><rect x="1542" y="689.98" width="5" height="1.2" fill="#ce9178"/><rect x="1548" y="689.98" width="2" height="1.2" fill="#ce9178"/><rect x="1551" y="689.98" width="4" height="1.2" fill="#9cdcfe"/><rect x="1556" y="689.98" width="2" height="1.2" fill="#d4d4d4"/><rect x="1512" y="694.06" width="1" height="1.2" fill="#d4d4d4"/><rect x="1508" y="696.10" width="1" height="1.2" fill="#d4d4d4"/><rect x="1508" y="698.14" width="10" height="1.2" fill="#dcdcaa"/><rect x="1519" y="698.14" width="1" height="1.2" fill="#d4d4d4"/><rect x="1521" y="698.14" width="8" height="1.2" fill="#ce9178"/><rect x="1530" y="698.14" width="4" height="1.2" fill="#ce9178"/><rect x="1535" y="698.14" width="5" height="1.2" fill="#ce9178"/><rect x="1541" y="698.14" width="1" height="1.2" fill="#ce9178"/><rect x="1543" y="698.14" width="3" height="1.2" fill="#d4d4d4"/><rect x="1504" y="700.18" width="1" height="1.2" fill="#d4d4d4"/><rect x="1504" y="704.26" width="2" height="1.2" fill="#c586c0"/><rect x="1507" y="704.26" width="2" height="1.2" fill="#d4d4d4"/><rect x="1510" y="704.26" width="6" height="1.2" fill="#dcdcaa"/><rect x="1517" y="704.26" width="1" height="1.2" fill="#d4d4d4"/><rect x="1519" y="704.26" width="14" height="1.2" fill="#9cdcfe"/><rect x="1534" y="704.26" width="4" height="1.2" fill="#d4d4d4"/><rect x="1539" y="704.26" width="3" height="1.2" fill="#d4d4d4"/><rect x="1508" y="706.30" width="2" height="1.2" fill="#c586c0"/><rect x="1511" y="706.30" width="2" height="1.2" fill="#d4d4d4"/><rect x="1514" y="706.30" width="11" height="1.2" fill="#dcdcaa"/><rect x="1526" y="706.30" width="1" height="1.2" fill="#d4d4d4"/><rect x="1528" y="706.30" width="8" height="1.2" fill="#9cdcfe"/><rect x="1537" y="706.30" width="2" height="1.2" fill="#d4d4d4"/><rect x="1540" y="706.30" width="3" height="1.2" fill="#d4d4d4"/><rect x="1512" y="708.34" width="1" height="1.2" fill="#d4d4d4"/><rect x="1512" y="710.38" width="8" height="1.2" fill="#9cdcfe"/><rect x="1521" y="710.38" width="3" height="1.2" fill="#d4d4d4"/><rect x="1525" y="710.38" width="11" height="1.2" fill="#dcdcaa"/><rect x="1537" y="710.38" width="1" height="1.2" fill="#d4d4d4"/><rect x="1539" y="710.38" width="6" height="1.2" fill="#ce9178"/><rect x="1546" y="710.38" width="6" height="1.2" fill="#ce9178"/><rect x="1553" y="710.38" width="3" height="1.2" fill="#ce9178"/><rect x="1557" y="710.38" width="8" height="1.2" fill="#9cdcfe"/><rect x="1566" y="710.38" width="2" height="1.2" fill="#d4d4d4"/><rect x="1512" y="712.42" width="9" height="1.2" fill="#dcdcaa"/><rect x="1522" y="712.42" width="1" height="1.2" fill="#d4d4d4"/><rect x="1524" y="712.42" width="4" height="1.2" fill="#ce9178"/><rect x="1529" y="712.42" width="4" height="1.2" fill="#ce9178"/><rect x="1534" y="712.42" width="5" height="1.2" fill="#ce9178"/><rect x="1540" y="712.42" width="3" height="1.2" fill="#ce9178"/><rect x="1544" y="712.42" width="3" height="1.2" fill="#d4d4d4"/><rect x="1512" y="714.46" width="4" height="1.2" fill="#c586c0"/><rect x="1517" y="714.46" width="1" height="1.2" fill="#d4d4d4"/><rect x="1519" y="714.46" width="7" height="1.2" fill="#ce9178"/><rect x="1527" y="714.46" width="1" height="1.2" fill="#d4d4d4"/><rect x="1508" y="716.50" width="1" height="1.2" fill="#d4d4d4"/><rect x="1504" y="718.54" width="1" height="1.2" fill="#d4d4d4"/><rect x="1504" y="720.58" width="2" height="1.2" fill="#c586c0"/><rect x="1507" y="720.58" width="2" height="1.2" fill="#d4d4d4"/><rect x="1510" y="720.58" width="12" height="1.2" fill="#dcdcaa"/><rect x="1523" y="720.58" width="1" height="1.2" fill="#d4d4d4"/><rect x="1525" y="720.58" width="6" height="1.2" fill="#9cdcfe"/><rect x="1532" y="720.58" width="5" height="1.2" fill="#d4d4d4"/><rect x="1538" y="720.58" width="3" height="1.2" fill="#d4d4d4"/><rect x="1504" y="724.66" width="1" height="1.2" fill="#d4d4d4"/><rect x="1500" y="249.34" width="8" height="1.2" fill="#569cd6"/><rect x="1509" y="249.34" width="24" height="1.2" fill="#dcdcaa"/><rect x="1534" y="249.34" width="4" height="1.2" fill="#d4d4d4"/><rect x="1504" y="251.38" width="6" height="1.2" fill="#c586c0"/><rect x="1511" y="251.38" width="8" height="1.2" fill="#9cdcfe"/><rect x="1520" y="251.38" width="14" height="1.2" fill="#9cdcfe"/><rect x="1535" y="251.38" width="1" height="1.2" fill="#d4d4d4"/><rect x="1504" y="255.46" width="40" height="1.2" fill="#6a9955"/><rect x="1504" y="257.50" width="12" height="1.2" fill="#9cdcfe"/><rect x="1517" y="257.50" width="3" height="1.2" fill="#d4d4d4"/><rect x="1521" y="257.50" width="15" height="1.2" fill="#dcdcaa"/><rect x="1537" y="257.50" width="3" height="1.2" fill="#d4d4d4"/><rect x="1504" y="259.54" width="2" height="1.2" fill="#c586c0"/><rect x="1507" y="259.54" width="2" height="1.2" fill="#d4d4d4"/><rect x="1510" y="259.54" width="12" height="1.2" fill="#9cdcfe"/><rect x="1523" y="259.54" width="5" height="1.2" fill="#d4d4d4"/><rect x="1529" y="259.54" width="5" height="1.2" fill="#569cd6"/><rect x="1535" y="259.54" width="3" height="1.2" fill="#d4d4d4"/><rect x="1508" y="261.58" width="6" height="1.2" fill="#c586c0"/><rect x="1515" y="261.58" width="1" height="1.2" fill="#d4d4d4"/><rect x="1517" y="261.58" width="5" height="1.2" fill="#569cd6"/><rect x="1523" y="261.58" width="1" height="1.2" fill="#d4d4d4"/><rect x="1504" y="263.62" width="1" height="1.2" fill="#d4d4d4"/><rect x="1504" y="267.70" width="2" height="1.2" fill="#c586c0"/><rect x="1507" y="267.70" width="2" height="1.2" fill="#d4d4d4"/><rect x="1510" y="267.70" width="10" height="1.2" fill="#dcdcaa"/><rect x="1521" y="267.70" width="1" height="1.2" fill="#d4d4d4"/><rect x="1523" y="267.70" width="12" height="1.2" fill="#9cdcfe"/><rect x="1536" y="267.70" width="20" height="1.2" fill="#d4d4d4"/><rect x="1557" y="267.70" width="4" height="1.2" fill="#d4d4d4"/><rect x="1508" y="269.74" width="9" height="1.2" fill="#dcdcaa"/><rect x="1518" y="269.74" width="1" height="1.2" fill="#d4d4d4"/><rect x="1520" y="269.74" width="8" height="1.2" fill="#ce9178"/><rect x="1529" y="269.74" width="4" height="1.2" fill="#ce9178"/><rect x="1534" y="269.74" width="5" height="1.2" fill="#ce9178"/><rect x="1540" y="269.74" width="4" height="1.2" fill="#ce9178"/><rect x="1545" y="269.74" width="8" height="1.2" fill="#ce9178"/><rect x="1554" y="269.74" width="4" height="1.2" fill="#ce9178"/><rect x="1559" y="269.74" width="7" height="1.2" fill="#ce9178"/><rect x="1567" y="269.74" width="1" height="1.2" fill="#ce9178"/><rect x="1508" y="271.78" width="6" height="1.2" fill="#c586c0"/><rect x="1515" y="271.78" width="1" height="1.2" fill="#d4d4d4"/><rect x="1517" y="271.78" width="5" height="1.2" fill="#569cd6"/><rect x="1523" y="271.78" width="1" height="1.2" fill="#d4d4d4"/><rect x="1504" y="273.82" width="1" height="1.2" fill="#d4d4d4"/><rect x="1504" y="277.90" width="12" height="1.2" fill="#9cdcfe"/><rect x="1517" y="277.90" width="3" height="1.2" fill="#d4d4d4"/><rect x="1521" y="277.90" width="13" height="1.2" fill="#dcdcaa"/><rect x="1535" y="277.90" width="1" height="1.2" fill="#d4d4d4"/><rect x="1537" y="277.90" width="12" height="1.2" fill="#9cdcfe"/><rect x="1550" y="277.90" width="2" height="1.2" fill="#d4d4d4"/><rect x="1504" y="281.98" width="2" height="1.2" fill="#c586c0"/><rect x="1507" y="281.98" width="2" height="1.2" fill="#d4d4d4"/><rect x="1510" y="281.98" width="12" height="1.2" fill="#9cdcfe"/><rect x="1523" y="281.98" width="4" height="1.2" fill="#d4d4d4"/><rect x="1528" y="281.98" width="12" height="1.2" fill="#9cdcfe"/><rect x="1541" y="281.98" width="3" height="1.2" fill="#d4d4d4"/><rect x="1508" y="284.02" width="9" height="1.2" fill="#dcdcaa"/><rect x="1518" y="284.02" width="1" height="1.2" fill="#d4d4d4"/><rect x="1520" y="284.02" width="5" height="1.2" fill="#ce9178"/><rect x="1526" y="284.02" width="5" height="1.2" fill="#ce9178"/><rect x="1532" y="284.02" width="5" height="1.2" fill="#ce9178"/><rect x="1538" y="284.02" width="8" height="1.2" fill="#ce9178"/><rect x="1547" y="284.02" width="7" height="1.2" fill="#ce9178"/><rect x="1555" y="284.02" width="3" height="1.2" fill="#ce9178"/><rect x="1559" y="284.02" width="7" height="1.2" fill="#ce9178"/><rect x="1567" y="284.02" width="1" height="1.2" fill="#ce9178"/><rect x="1569" y="284.02" width="3" height="1.2" fill="#d4d4d4"/><rect x="1504" y="286.06" width="1" height="1.2" fill="#d4d4d4"/><rect x="1506" y="286.06" width="5" height="1.2" fill="#c586c0"/><rect x="1512" y="286.06" width="1" height="1.2" fill="#d4d4d4"/><rect x="1508" y="288.10" width="12" height="1.2" fill="#9cdcfe"/><rect x="1521" y="288.10" width="3" height="1.2" fill="#d4d4d4"/><rect x="1525" y="288.10" width="25" height="1.2" fill="#dcdcaa"/><rect x="1551" y="288.10" width="1" height="1.2" fill="#d4d4d4"/><rect x="1553" y="288.10" width="12" height="1.2" fill="#9cdcfe"/><rect x="1566" y="288.10" width="2" height="1.2" fill="#d4d4d4"/><rect x="1504" y="290.14" width="1" height="1.2" fill="#d4d4d4"/><rect x="1504" y="294.22" width="8" height="1.2" fill="#9cdcfe"/><rect x="1513" y="294.22" width="3" height="1.2" fill="#d4d4d4"/><rect x="1517" y="294.22" width="14" height="1.2" fill="#dcdcaa"/><rect x="1532" y="294.22" width="2" height="1.2" fill="#d4d4d4"/><rect x="1535" y="294.22" width="6" height="1.2" fill="#569cd6"/><rect x="1542" y="294.22" width="3" height="1.2" fill="#d4d4d4"/><rect x="1546" y="294.22" width="4" height="1.2" fill="#569cd6"/><rect x="1551" y="294.22" width="4" height="1.2" fill="#ce9178"/><rect x="1556" y="294.22" width="3" height="1.2" fill="#ce9178"/><rect x="1560" y="294.22" width="5" height="1.2" fill="#569cd6"/><rect x="1566" y="294.22" width="6" height="1.2" fill="#569cd6"/><rect x="1504" y="298.30" width="2" height="1.2" fill="#c586c0"/><rect x="1507" y="298.30" width="2" height="1.2" fill="#d4d4d4"/><rect x="1510" y="298.30" width="12" height="1.2" fill="#dcdcaa"/><rect x="1523" y="298.30" width="1" height="1.2" fill="#d4d4d4"/><rect x="1525" y="298.30" width="8" height="1.2" fill="#9cdcfe"/><rect x="1534" y="298.30" width="6" height="1.2" fill="#d4d4d4"/><rect x="1541" y="298.30" width="3" height="1.2" fill="#d4d4d4"/><rect x="1508" y="300.34" width="7" height="1.2" fill="#c586c0"/><rect x="1516" y="300.34" width="1" height="1.2" fill="#d4d4d4"/><rect x="1518" y="300.34" width="8" height="1.2" fill="#9cdcfe"/><rect x="1527" y="300.34" width="4" height="1.2" fill="#d4d4d4"/><rect x="1532" y="300.34" width="7" height="1.2" fill="#9cdcfe"/><rect x="1540" y="300.34" width="3" height="1.2" fill="#d4d4d4"/><rect x="1512" y="302.38" width="2" height="1.2" fill="#c586c0"/><rect x="1515" y="302.38" width="2" height="1.2" fill="#d4d4d4"/><rect x="1518" y="302.38" width="25" height="1.2" fill="#dcdcaa"/><rect x="1544" y="302.38" width="1" height="1.2" fill="#d4d4d4"/><rect x="1546" y="302.38" width="7" height="1.2" fill="#9cdcfe"/><rect x="1554" y="302.38" width="1" height="1.2" fill="#d4d4d4"/><rect x="1556" y="302.38" width="4" height="1.2" fill="#ce9178"/><rect x="1561" y="302.38" width="5" height="1.2" fill="#ce9178"/><rect x="1567" y="302.38" width="5" height="1.2" fill="#d4d4d4"/><rect x="1516" y="304.42" width="6" height="1.2" fill="#c586c0"/><rect x="1523" y="304.42" width="1" height="1.2" fill="#d4d4d4"/><rect x="1525" y="304.42" width="4" height="1.2" fill="#569cd6"/><rect x="1530" y="304.42" width="1" height="1.2" fill="#d4d4d4"/><rect x="1512" y="306.46" width="1" height="1.2" fill="#d4d4d4"/><rect x="1514" y="306.46" width="7" height="1.2" fill="#c586c0"/><rect x="1522" y="306.46" width="2" height="1.2" fill="#d4d4d4"/><rect x="1525" y="306.46" width="7" height="1.2" fill="#9cdcfe"/><rect x="1533" y="306.46" width="1" height="1.2" fill="#d4d4d4"/><rect x="1535" y="306.46" width="4" height="1.2" fill="#ce9178"/><rect x="1540" y="306.46" width="5" height="1.2" fill="#ce9178"/><rect x="1546" y="306.46" width="5" height="1.2" fill="#d4d4d4"/><rect x="1552" y="306.46" width="12" height="1.2" fill="#9cdcfe"/><rect x="1565" y="306.46" width="3" height="1.2" fill="#d4d4d4"/><rect x="1516" y="308.50" width="6" height="1.2" fill="#c586c0"/><rect x="1523" y="308.50" width="1" height="1.2" fill="#d4d4d4"/><rect x="1525" y="308.50" width="4" height="1.2" fill="#569cd6"/><rect x="1530" y="308.50" width="1" height="1.2" fill="#d4d4d4"/><rect x="1512" y="310.54" width="1" height="1.2" fill="#d4d4d4"/></svg>
<div class="r" style="left:1484px;top:83px;width:8px;height:642px;background:linear-gradient(90deg,rgba(0,0,0,0),rgba(0,0,0,0.45));"></div>
<div class="r" style="left:1572px;top:83px;width:20px;height:642px;background:#1f1f1f;border-left:1px solid #141414;border-top:1px solid #141414;"></div>
<div class="r" style="left:1572px;top:263px;width:20px;height:30px;background:#4a4a4a;"></div>
<div class="r" style="left:1579px;top:269px;width:7px;height:23px;background:#9a9a9a;"></div>
<div class="r" style="left:1572px;top:278px;width:20px;height:9px;background:rgba(125,125,45,0.55);"></div>
<div class="r" style="left:1572px;top:278px;width:20px;height:2px;background:rgba(230,230,230,0.35);"></div>
<div class="r" style="left:1579px;top:295px;width:7px;height:8px;background:#9a9a9a;"></div>
<div class="r" style="left:577px;top:82px;width:914px;height:30px;background:#1f1f1f;box-shadow:0 3px 3px -1px #000;"></div>
<div class="ln" style="top:83.3px">132</div>
<div class="cl" style="top:83.3px"><span style="color:#569cd6">function</span><span style="color:#d4d4d4"> </span><span style="color:#dcdcaa">remote_client_authorized</span><span style="color:#ffd700">()</span><span style="color:#d4d4d4"> </span><span style="color:#ffd700">{</span></div>
<div class="r" style="left:678px;top:708px;width:431px;height:17px;background:rgba(121,121,121,0.44);"></div>
<div class="r" style="left:577px;top:51px;width:1020px;height:31px;background:#1f1f1f;"></div>
<svg class="r" style="left:604.8px;top:60.7px" width="18.72" height="13.44" viewBox="0 0 18.72 13.44"><g transform="scale(0.96)"><path d="M0.3,5 C0.3,1.8 2,0.3 5,0.3 L13.5,0.3 C16.5,0.3 18.2,2.5 18.2,5.5 L16.8,7 L16,12.7 L12.2,12.7 L12,9.5 L9,9.5 L8.9,12.7 L5.7,12.7 L5.6,8.8 L4,8.6 L4,12.5 L2.3,12.5 L2,8.3 C0.8,7.5 0.3,6.5 0.3,5 Z" fill="#a074c4"/><path d="M9.2,0.4 L9.2,4.2 C9.2,5 8.5,5.6 7.6,5.6 L5.6,5.6" fill="none" stroke="#1f1f1f" stroke-width="0.9"/></g></svg>
<div class="t" style="left:632.00px;top:58.09px;font-size:19.39px;line-height:19.39px;color:#a9a9a9;font-weight:normal;font-style:normal;font-family:'Liberation Sans';">remote_agent.php</div>
<div class="r" style="left:577px;top:0px;width:1020px;height:51px;background:#181818;border-bottom:1px solid #2b2b2b;"></div>
<div class="r" style="left:577px;top:0px;width:1020px;height:1px;background:#2b2b2b;"></div>
<div class="r" style="left:758px;top:0px;width:1px;height:50px;background:#2b2b2b;"></div>
<div class="r" style="left:759px;top:0px;width:245px;height:52px;background:#1f1f1f;"></div>
<div class="r" style="left:759px;top:1px;width:245px;height:2px;background:#0078d4;"></div>
<div class="r" style="left:1004px;top:0px;width:1px;height:50px;background:#2b2b2b;"></div>
<div class="r" style="left:1222px;top:0px;width:1px;height:50px;background:#2b2b2b;"></div>
<div class="t" style="left:596.50px;top:17.26px;font-size:18.00px;line-height:18.00px;color:#cbcb41;font-weight:normal;font-style:normal;font-family:'Liberation Sans';transform:scaleY(1.050);transform-origin:0 15.24px;">{ }</div>
<div class="t" style="left:623.00px;top:16.79px;font-size:18.56px;line-height:18.56px;color:#9d9d9d;font-weight:normal;font-style:normal;font-family:'Liberation Sans';">launch.json</div>
<svg class="r" style="left:778.3px;top:19.3px" width="19.5" height="14.0" viewBox="0 0 19.5 14.0"><g transform="scale(1.0)"><path d="M0.3,5 C0.3,1.8 2,0.3 5,0.3 L13.5,0.3 C16.5,0.3 18.2,2.5 18.2,5.5 L16.8,7 L16,12.7 L12.2,12.7 L12,9.5 L9,9.5 L8.9,12.7 L5.7,12.7 L5.6,8.8 L4,8.6 L4,12.5 L2.3,12.5 L2,8.3 C0.8,7.5 0.3,6.5 0.3,5 Z" fill="#a074c4"/><path d="M9.2,0.4 L9.2,4.2 C9.2,5 8.5,5.6 7.6,5.6 L5.6,5.6" fill="none" stroke="#1f1f1f" stroke-width="0.9"/></g></svg>
<div class="t" style="left:805.00px;top:16.09px;font-size:19.39px;line-height:19.39px;color:#ffffff;font-weight:normal;font-style:normal;font-family:'Liberation Sans';">remote_agent.php</div>
<div class="r" style="left:978px;top:21px;width:12px;height:12px;background:#ffffff;border-radius:6px;"></div>
<svg class="r" style="left:1025px;top:19.3px" width="19.5" height="14.0" viewBox="0 0 19.5 14.0"><g transform="scale(1.0)"><path d="M0.3,5 C0.3,1.8 2,0.3 5,0.3 L13.5,0.3 C16.5,0.3 18.2,2.5 18.2,5.5 L16.8,7 L16,12.7 L12.2,12.7 L12,9.5 L9,9.5 L8.9,12.7 L5.7,12.7 L5.6,8.8 L4,8.6 L4,12.5 L2.3,12.5 L2,8.3 C0.8,7.5 0.3,6.5 0.3,5 Z" fill="#a074c4"/><path d="M9.2,0.4 L9.2,4.2 C9.2,5 8.5,5.6 7.6,5.6 L5.6,5.6" fill="none" stroke="#181818" stroke-width="0.9"/></g></svg>
<div class="t" style="left:1052.00px;top:16.09px;font-size:19.39px;line-height:19.39px;color:#9d9d9d;font-weight:normal;font-style:italic;font-family:'Liberation Sans';">data_qu</div>
<div class="r" style="left:1118px;top:-6px;width:276px;height:45px;background:#181818;border:1px solid #2b2b2b;border-radius:7px;box-shadow:0 0 8px rgba(0,0,0,0.6);"></div>
<svg class="r" style="left:1130.3px;top:11px" width="10" height="16" viewBox="0 0 10 16"><circle cx="2" cy="2" r="1.4" fill="#8b8b8b"/><circle cx="2" cy="7.5" r="1.4" fill="#8b8b8b"/><circle cx="2" cy="13" r="1.4" fill="#8b8b8b"/><circle cx="7.5" cy="2" r="1.4" fill="#8b8b8b"/><circle cx="7.5" cy="7.5" r="1.4" fill="#8b8b8b"/><circle cx="7.5" cy="13" r="1.4" fill="#8b8b8b"/></svg>
<svg class="r" style="left:1155px;top:8px" width="24" height="22" viewBox="0 0 24 22"><line x1="3" y1="2.5" x2="3" y2="19" stroke="#75beff" stroke-width="2"/><path d="M8,2.5 L20,10.8 L8,19 Z" fill="none" stroke="#75beff" stroke-width="1.9" stroke-linejoin="round"/></svg>
<svg class="r" style="left:1193px;top:8px" width="22" height="22" viewBox="0 0 22 22"><path d="M3,11 A7.5,7.5 0 0 1 17.5,8" fill="none" stroke="#75beff" stroke-width="2"/><polyline points="18.5,2.5 18.5,8.5 12.5,8.5" fill="none" stroke="#75beff" stroke-width="2"/><circle cx="10.5" cy="18" r="2.6" fill="#75beff"/></svg>
<svg class="r" style="left:1231px;top:7px" width="20" height="23" viewBox="0 0 20 23"><line x1="10" y1="1.5" x2="10" y2="13" stroke="#75beff" stroke-width="2"/><polyline points="5,8.5 10,13.5 15,8.5" fill="none" stroke="#75beff" stroke-width="2"/><circle cx="10" cy="19" r="2.6" fill="#75beff"/></svg>
<svg class="r" style="left:1268px;top:7px" width="20" height="23" viewBox="0 0 20 23"><line x1="10" y1="3" x2="10" y2="14" stroke="#75beff" stroke-width="2"/><polyline points="5,7.5 10,2.5 15,7.5" fill="none" stroke="#75beff" stroke-width="2"/><circle cx="10" cy="19" r="2.6" fill="#75beff"/></svg>
<svg class="r" style="left:1304px;top:8px" width="23" height="22" viewBox="0 0 23 22"><path d="M5.5,6 A8,8 0 1 1 4,14" fill="none" stroke="#89d185" stroke-width="2"/><polyline points="4.5,2 4.5,7 9.5,7" fill="none" stroke="#89d185" stroke-width="2"/></svg>
<div class="r" style="left:1344px;top:10px;width:18px;height:17px;background:transparent;border:2px solid #f48771;border-radius:2px;"></div>
<svg class="r" style="left:1369px;top:14px" width="15" height="10" viewBox="0 0 15 10"><polyline points="2,2 7.5,8 13,2" fill="none" stroke="#cccccc" stroke-width="1.3"/></svg>
<svg class="r" style="left:1456px;top:16px" width="21" height="21" viewBox="0 0 21 21"><path d="M2.5,2.5 L18,10.5 L2.5,18.5 Z" fill="none" stroke="#cccccc" stroke-width="1.5" stroke-linejoin="round"/></svg>
<svg class="r" style="left:1480px;top:21.5px" width="16" height="10.5" viewBox="0 0 16 10.5"><polyline points="2,2 8.0,8.5 14,2" fill="none" stroke="#cccccc" stroke-width="1.3"/></svg>
<div class="r" style="left:1511px;top:16.2px;width:20.5px;height:20.3px;background:transparent;border:1.6px solid #cccccc;border-radius:3.5px;"></div>
<div class="r" style="left:1520.5px;top:17px;width:1.5px;height:19px;background:#cccccc;"></div>
<svg class="r" style="left:1546px;top:20px" width="24" height="12" viewBox="0 0 24 12"><circle cx="7.0" cy="6.6" r="1.65" fill="#cccccc"/><circle cx="12.9" cy="6.6" r="1.65" fill="#cccccc"/><circle cx="18.8" cy="6.6" r="1.65" fill="#cccccc"/></svg>
<div class="r" style="left:1592px;top:0px;width:1px;height:725px;background:#2b2b2b;"></div>
<div class="r" style="left:1593px;top:0px;width:4px;height:725px;background:#1c1c1c;"></div>
</div>
<div id="side">
<div class="r" style="left:0px;top:0px;width:576px;height:725px;background:#181818;"></div>
<div class="r" style="left:0px;top:0px;width:576px;height:1px;background:#2b2b2b;"></div>
<div class="t" style="left:28.50px;top:19.25px;font-size:14.82px;line-height:14.82px;color:#cccccc;font-weight:normal;font-style:normal;font-family:'Liberation Sans';transform:scaleY(1.110);transform-origin:0 12.55px;">RUN AND DEBUG</div>
<div class="r" style="left:164px;top:10px;width:319px;height:32.5px;background:#313131;border:1px solid #3c3c3c;border-radius:2px;"></div>
<svg class="r" style="left:171px;top:15px" width="22" height="22" viewBox="0 0 22 22"><path d="M3,2.5 L19,11 L3,19.5 Z" fill="none" stroke="#89d185" stroke-width="1.9" stroke-linejoin="round"/></svg>
<div class="r" style="left:197px;top:14px;width:1px;height:24px;background:#454545;"></div>
<div class="t" style="left:210.00px;top:17.10px;font-size:19.61px;line-height:19.61px;color:#cccccc;font-weight:normal;font-style:normal;font-family:'Liberation Sans';">Listen for Xdebug</div>
<svg class="r" style="left:456px;top:21px" width="19" height="12.5" viewBox="0 0 19 12.5"><polyline points="2,2 9.5,10.5 17,2" fill="none" stroke="#cccccc" stroke-width="1.5"/></svg>
<svg class="r" style="left:494px;top:15.5px" width="22" height="22" viewBox="0 0 22 22"><path d="M17.02,9.14 L20.17,9.47 L20.17,12.53 L17.02,12.86 L16.57,13.94 L18.57,16.41 L16.41,18.57 L13.94,16.57 L12.86,17.02 L12.53,20.17 L9.47,20.17 L9.14,17.02 L8.06,16.57 L5.59,18.57 L3.43,16.41 L5.43,13.94 L4.98,12.86 L1.83,12.53 L1.83,9.47 L4.98,9.14 L5.43,8.06 L3.43,5.59 L5.59,3.43 L8.06,5.43 L9.14,4.98 L9.47,1.83 L12.53,1.83 L12.86,4.98 L13.94,5.43 L16.41,3.43 L18.57,5.59 L16.57,8.06 Z" fill="none" stroke="#cccccc" stroke-width="1.35" stroke-linejoin="round"/><circle cx="11" cy="11" r="2.4" fill="none" stroke="#cccccc" stroke-width="1.3"/></svg>
<div class="r" style="left:507.7px;top:16.5px;width:0px;height:0px;background:none;"></div>
<svg class="r" style="left:530px;top:20px" width="24" height="12" viewBox="0 0 24 12"><circle cx="7.0" cy="6.5" r="1.65" fill="#cccccc"/><circle cx="12.8" cy="6.5" r="1.65" fill="#cccccc"/><circle cx="18.6" cy="6.5" r="1.65" fill="#cccccc"/></svg>
<svg class="r" style="left:4px;top:62px" width="19" height="12" viewBox="0 0 19 12"><polyline points="2,2 9.5,10 17,2" fill="none" stroke="#cccccc" stroke-width="1.5"/></svg>
<div class="t" style="left:28.50px;top:60.31px;font-size:14.99px;line-height:14.99px;color:#cccccc;font-weight:bold;font-style:normal;font-family:'Liberation Sans';transform:scaleY(1.100);transform-origin:0 12.69px;">VARIABLES</div>
<svg class="r" style="left:17px;top:93px" width="19" height="12" viewBox="0 0 19 12"><polyline points="2,2 9.5,10 17,2" fill="none" stroke="#cccccc" stroke-width="1.5"/></svg>
<div class="t" style="left:42.90px;top:91.55px;font-size:14.71px;line-height:14.71px;color:#cccccc;font-weight:bold;font-style:normal;font-family:'Liberation Sans';transform:scaleY(1.100);transform-origin:0 12.45px;">Locals</div>
<div class="r" style="left:193px;top:146px;width:225px;height:32px;background:#2b4257;border-radius:5px;"></div>
<div class="t" style="left:54.30px;top:125.46px;font-size:15.45px;line-height:15.45px;color:#cccccc;font-weight:normal;font-style:normal;font-family:'Liberation Mono';transform:scaleY(1.150);transform-origin:0 11.84px;white-space:pre;"><span style="color:#c586c0">$client_addr = </span><span style="color:#ce9178">&quot;50.116.46.139&quot;</span></div>
<div class="t" style="left:54.30px;top:157.14px;font-size:15.45px;line-height:15.45px;color:#cccccc;font-weight:normal;font-style:normal;font-family:'Liberation Mono';transform:scaleY(1.150);transform-origin:0 11.84px;white-space:pre;"><span style="color:#c586c0">$client_name = </span><span style="color:#ce9178">&quot;casp3r-virtual-machine&quot;</span></div>
<svg class="r" style="left:32px;top:187px" width="12" height="16" viewBox="0 0 12 16"><polyline points="2,2 10,8.0 2,14" fill="none" stroke="#cccccc" stroke-width="1.5"/></svg>
<div class="t" style="left:54.30px;top:188.82px;font-size:15.45px;line-height:15.45px;color:#cccccc;font-weight:normal;font-style:normal;font-family:'Liberation Mono';transform:scaleY(1.150);transform-origin:0 11.84px;white-space:pre;"><span style="color:#c586c0">$config = </span><span style="color:#a0a0a0">array(23)</span></div>
<div class="t" style="left:54.30px;top:220.50px;font-size:15.45px;line-height:15.45px;color:#cccccc;font-weight:normal;font-style:normal;font-family:'Liberation Mono';transform:scaleY(1.150);transform-origin:0 11.84px;white-space:pre;"><span style="color:#c586c0">$poller = </span><span style="color:#a0a0a0">uninitialized</span></div>
<div class="t" style="left:54.30px;top:252.18px;font-size:15.45px;line-height:15.45px;color:#cccccc;font-weight:normal;font-style:normal;font-family:'Liberation Mono';transform:scaleY(1.150);transform-origin:0 11.84px;white-space:pre;"><span style="color:#c586c0">$poller_db_cnn_id = </span><span style="color:#569cd6">false</span></div>
<div class="r" style="left:0px;top:256px;width:576px;height:205px;background:#181818;"></div>
<div class="r" style="left:0px;top:256px;width:575px;height:1px;background:#2b2b2b;"></div>
<svg class="r" style="left:4px;top:267px" width="19" height="12" viewBox="0 0 19 12"><polyline points="2,2 9.5,10 17,2" fill="none" stroke="#cccccc" stroke-width="1.5"/></svg>
<div class="t" style="left:28.20px;top:264.61px;font-size:15.34px;line-height:15.34px;color:#cccccc;font-weight:bold;font-style:normal;font-family:'Liberation Sans';transform:scaleY(1.070);transform-origin:0 12.99px;">WATCH</div>
<div class="r" style="left:0px;top:461px;width:575px;height:1px;background:#2b2b2b;"></div>
<svg class="r" style="left:4px;top:472px" width="19" height="12" viewBox="0 0 19 12"><polyline points="2,2 9.5,10 17,2" fill="none" stroke="#cccccc" stroke-width="1.5"/></svg>
<div class="t" style="left:28.30px;top:470.29px;font-size:14.66px;line-height:14.66px;color:#cccccc;font-weight:bold;font-style:normal;font-family:'Liberation Sans';transform:scaleY(1.100);transform-origin:0 12.41px;">CALL STACK</div>
<div class="t" style="left:465.00px;top:471.19px;font-size:12.53px;line-height:12.53px;color:#cccccc;font-weight:bold;font-style:normal;font-family:'Liberation Sans';transform:scaleY(1.070);transform-origin:0 10.61px;">Paused on step</div>
<div class="r" style="left:0px;top:492px;width:575px;height:31.5px;background:#37373d;"></div>
<div class="t" style="left:42.90px;top:502.86px;font-size:15.45px;line-height:15.45px;color:#cccccc;font-weight:normal;font-style:normal;font-family:'Liberation Mono';transform:scaleY(1.150);transform-origin:0 11.84px;">remote_client_authorized</div>
<div class="t" style="left:336.00px;top:497.59px;font-size:19.39px;line-height:19.39px;color:#cccccc;font-weight:normal;font-style:normal;font-family:'Liberation Sans';">remote_agent.php</div>
<div class="r" style="left:509px;top:497px;width:51px;height:25.5px;background:#616161;border-radius:12.5px;"></div>
<div class="t" style="left:515.50px;top:500.75px;font-size:15.18px;line-height:15.18px;color:#ffffff;font-weight:normal;font-style:normal;font-family:'Liberation Sans';">154:1</div>
<div class="t" style="left:42.90px;top:534.66px;font-size:15.45px;line-height:15.45px;color:#cccccc;font-weight:normal;font-style:normal;font-family:'Liberation Mono';transform:scaleY(1.150);transform-origin:0 11.84px;">{main}</div>
<div class="t" style="left:344.40px;top:529.59px;font-size:19.39px;line-height:19.39px;color:#9d9d9d;font-weight:normal;font-style:normal;font-family:'Liberation Sans';">remote_agent.php</div>
<div class="r" style="left:518px;top:528px;width:42px;height:25px;background:#3f3f3f;border-radius:12px;"></div>
<div class="t" style="left:523.50px;top:532.45px;font-size:15.18px;line-height:15.18px;color:#b0b0b0;font-weight:normal;font-style:normal;font-family:'Liberation Sans';">53:1</div>
<div class="r" style="left:0px;top:665px;width:575px;height:1px;background:#2b2b2b;"></div>
<svg class="r" style="left:4px;top:676px" width="19" height="12" viewBox="0 0 19 12"><polyline points="2,2 9.5,10 17,2" fill="none" stroke="#cccccc" stroke-width="1.5"/></svg>
<div class="t" style="left:28.30px;top:674.78px;font-size:14.91px;line-height:14.91px;color:#cccccc;font-weight:bold;font-style:normal;font-family:'Liberation Sans';transform:scaleY(1.100);transform-origin:0 12.62px;">DEBUG CONSOLE</div>
<div class="r" style="left:28px;top:711px;width:518px;height:30px;background:#313131;border:1px solid #3c3c3c;border-radius:3px;"></div>
<div class="t" style="left:38.00px;top:719.10px;font-size:17.60px;line-height:17.60px;color:#8b8b8b;font-weight:normal;font-style:normal;font-family:'Liberation Sans';">Filter (e.g. text, !exclude, \escape)</div>
</div>
<div class="r" style="left:576px;top:0;width:1px;height:725px;background:#2b2b2b"></div>
</body></html>
